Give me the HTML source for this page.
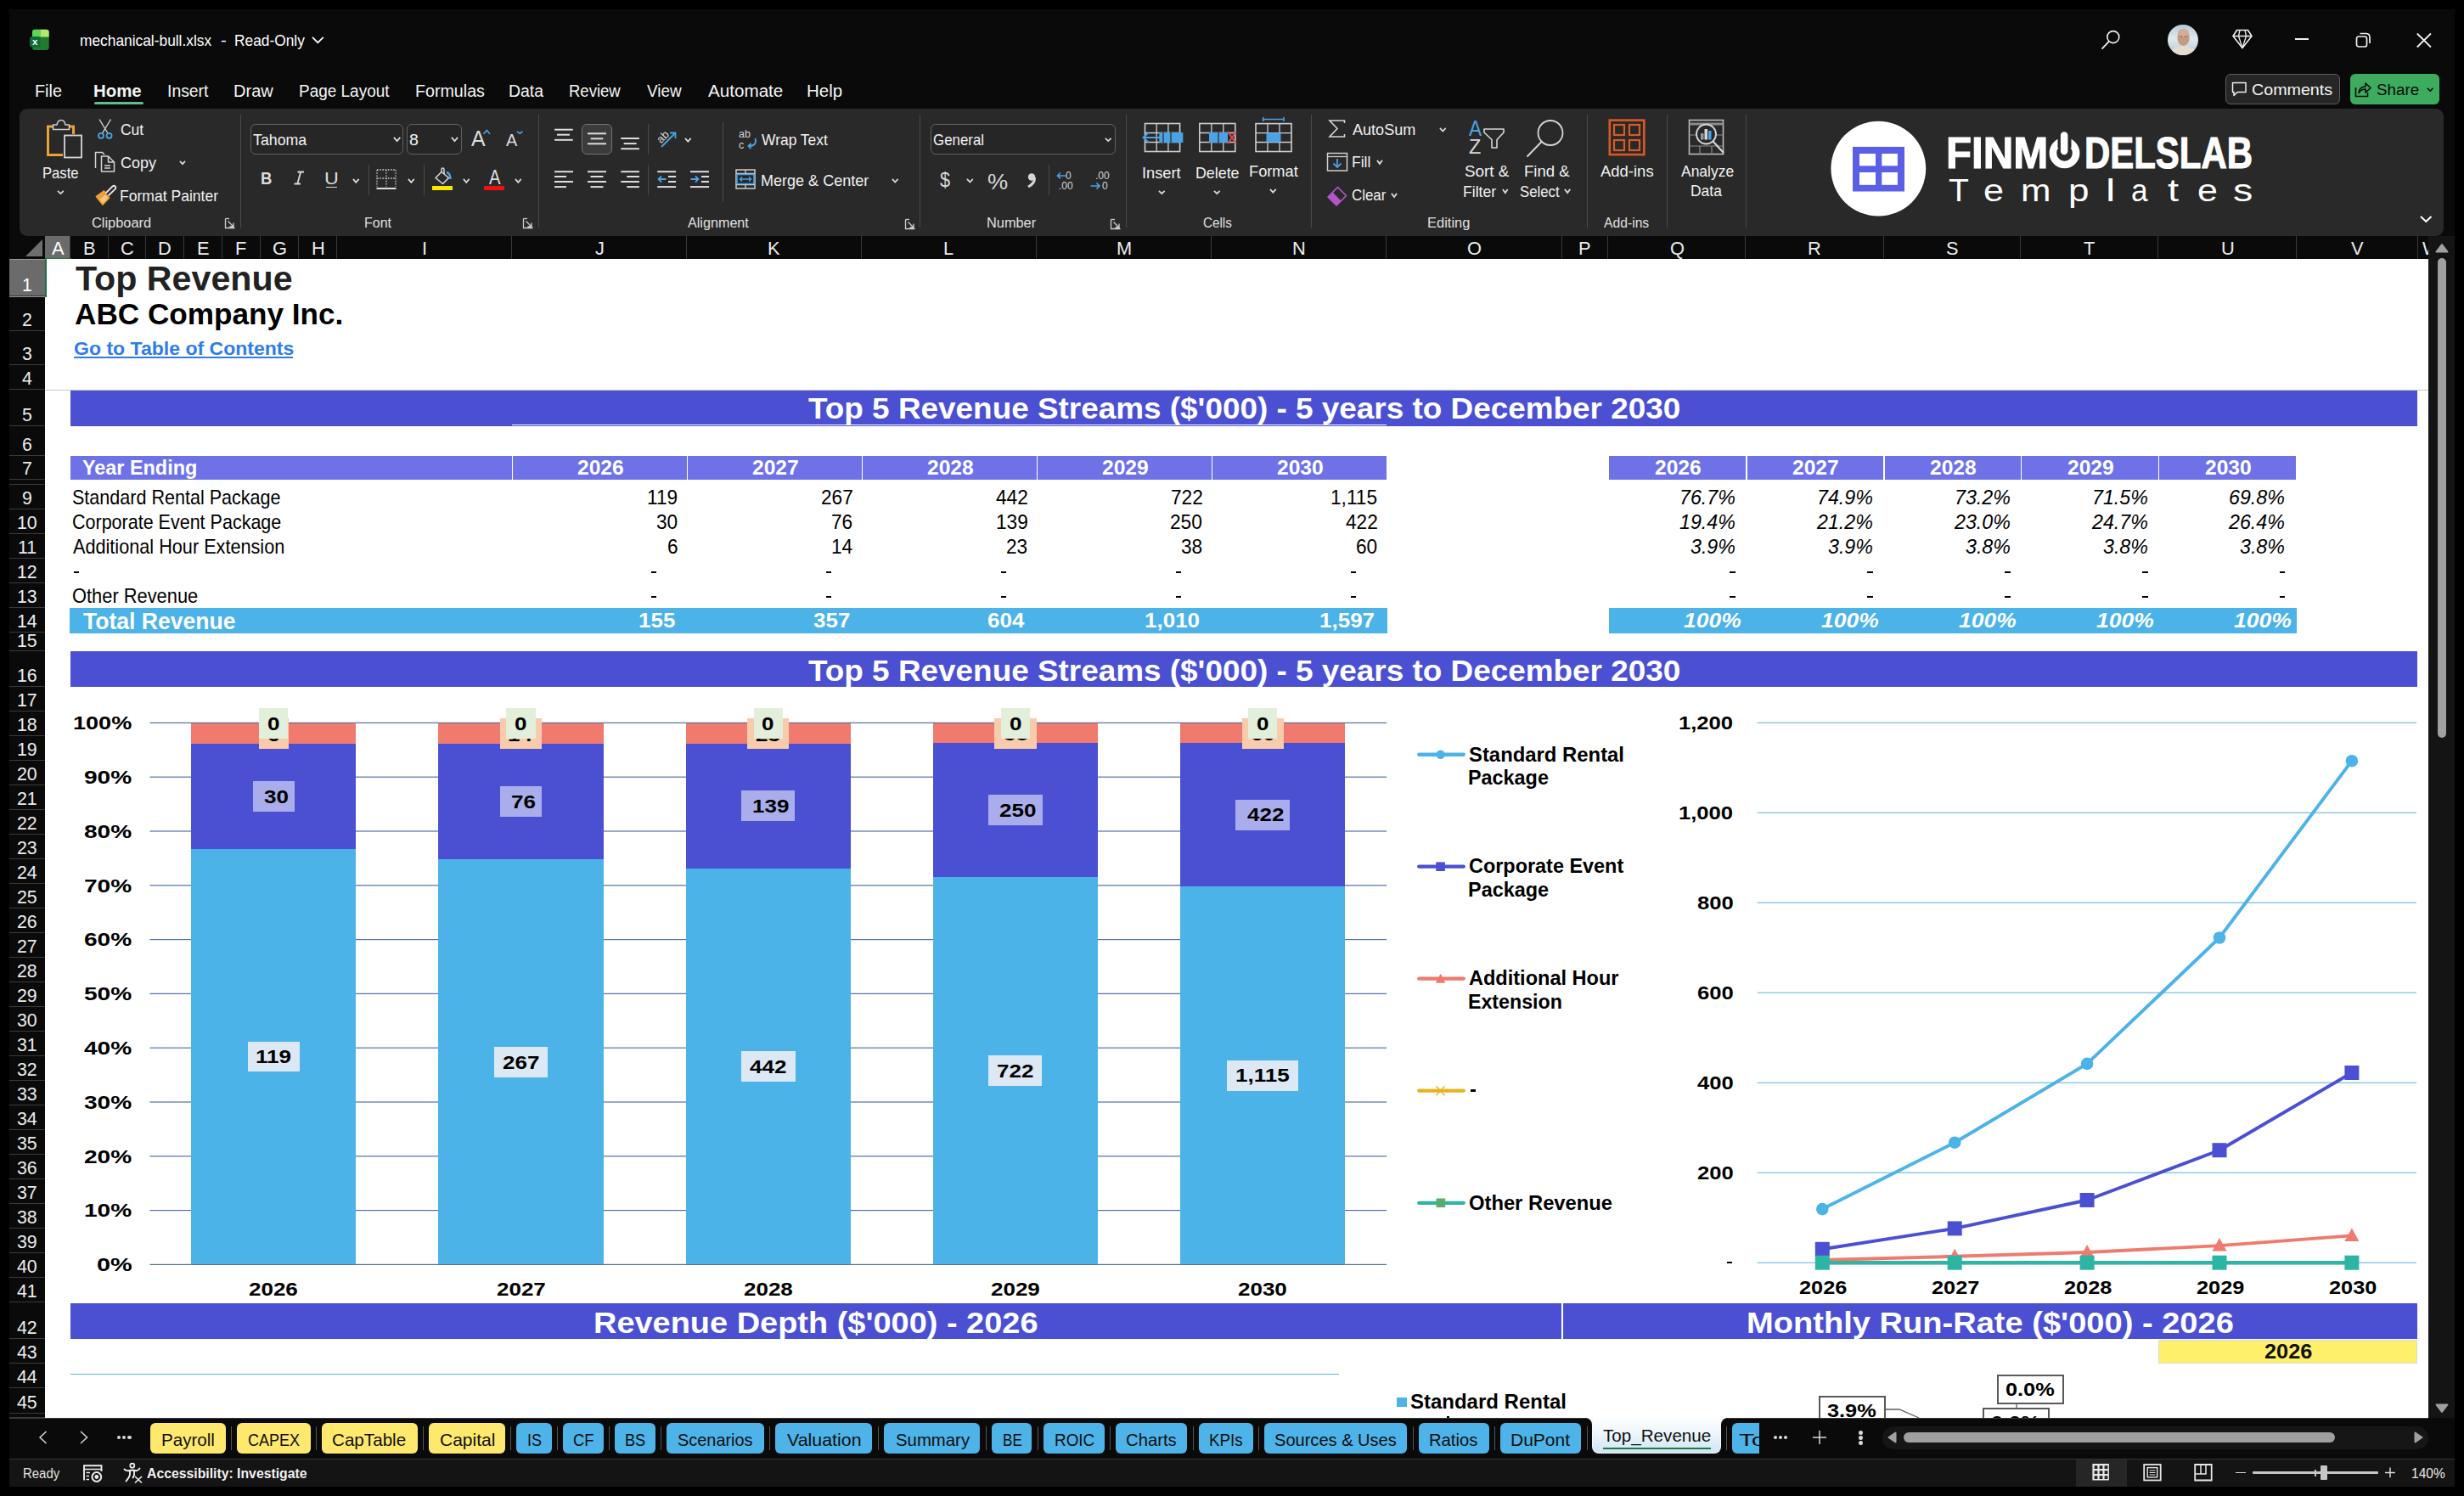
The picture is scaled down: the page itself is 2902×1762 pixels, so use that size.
<!DOCTYPE html>
<html><head><meta charset="utf-8"><title>Top Revenue</title>
<style>
*{margin:0;padding:0;box-sizing:border-box}
html,body{width:2902px;height:1762px;overflow:hidden;background:#000;font-family:"Liberation Sans",sans-serif;position:relative}
.a{position:absolute}
svg.a{overflow:visible}
.t{position:absolute;white-space:nowrap;line-height:1;font-family:"Liberation Sans",sans-serif}
</style></head><body>
<div class="a" style="left:11px;top:11px;width:2880px;height:1740px;background:#0a0a0a;"></div>
<svg class="a" style="left:34px;top:34px;" width="26" height="26" viewBox="0 0 26 26">
      <rect x="4" y="0.7" width="19.7" height="24.2" rx="3" fill="#227b2c"/>
      <path d="M7 0.7 H13.5 V9.5 H4 V3.7 Q4 0.7 7 0.7 Z" fill="#5ed65a"/>
      <path d="M13.5 0.7 H20.7 Q23.7 0.7 23.7 3.7 V9.5 H13.5 Z" fill="#b6e870"/>
      <rect x="1" y="8.9" width="12.5" height="12.9" rx="3" fill="#0f6b3a"/>
      <text x="7.2" y="19" font-size="11.5" font-weight="700" fill="#f4fff4" text-anchor="middle" font-family="Liberation Sans">x</text>
    </svg>
<div class="t" style="left:94.37px;top:39px;font-size:18.20px;font-weight:400;color:#ffffff;transform:scaleX(0.9534);transform-origin:0 0;">mechanical-bull.xlsx</div>
<div class="t" style="left:260.08px;top:39px;font-size:18.20px;font-weight:400;color:#ffffff;transform:scaleX(1.1213);transform-origin:0 0;">-</div>
<div class="t" style="left:276.11px;top:39px;font-size:18.20px;font-weight:400;color:#ffffff;transform:scaleX(0.9528);transform-origin:0 0;">Read-Only</div>
<svg class="a" style="left:365px;top:41px;" width="19" height="12" viewBox="0 0 19 12"><path d="M2.9 2.9 L9.3 9.2 L15.8 2.9" stroke="#ffffff" stroke-width="1.7" fill="none" stroke-linecap="butt" stroke-linejoin="miter"/></svg>
<svg class="a" style="left:2470px;top:30px;" width="30" height="30" viewBox="0 0 30 30"><circle cx="18.8" cy="13.6" r="7" stroke="#f0f0f0" stroke-width="1.6" fill="none"/><path d="M13.8 18.8 L6 27.2" stroke="#f0f0f0" stroke-width="1.7" stroke-linecap="round"/></svg>
<svg class="a" style="left:2553px;top:29px;" width="36" height="36" viewBox="0 0 36 36"><defs><clipPath id="avc"><circle cx="18" cy="18" r="18"/></clipPath>
      <linearGradient id="avg" x1="0" y1="0" x2="0" y2="1"><stop offset="0" stop-color="#b7c9da"/><stop offset="0.45" stop-color="#dfe9ee"/><stop offset="1" stop-color="#b9c6cc"/></linearGradient></defs>
      <g clip-path="url(#avc)"><rect width="36" height="36" fill="url(#avg)"/>
      <ellipse cx="18.5" cy="15.5" rx="7.2" ry="9.5" fill="#c49a82"/><ellipse cx="18.5" cy="9.5" rx="6.5" ry="4.5" fill="#d2ad97"/>
      <path d="M15 14 H17 M20 14 H22" stroke="#6e5142" stroke-width="1"/>
      <path d="M3 36 Q5 25.5 18.5 25.5 Q32 25.5 34 36 Z" fill="#e4dccf"/></g></svg>
<svg class="a" style="left:2627px;top:33px;" width="28" height="27" viewBox="0 0 28 27"><path d="M7.5 2.5 H20.5 L25 9.5 L14 23.5 L3 9.5 Z" stroke="#f0f0f0" stroke-width="1.6" fill="none" stroke-linejoin="round"/><path d="M3 9.5 H25 M11 2.5 L9.5 9.5 L14 23.5 L18.5 9.5 L17 2.5" stroke="#f0f0f0" stroke-width="1.3" fill="none" stroke-linejoin="round"/></svg>
<div class="a" style="left:2703px;top:45px;width:16px;height:2px;background:#f0f0f0;"></div>
<svg class="a" style="left:2772px;top:36px;" width="22" height="22" viewBox="0 0 22 22"><rect x="3.5" y="7" width="12" height="12" rx="2.5" stroke="#f0f0f0" stroke-width="1.7" fill="none"/><path d="M7.5 3.5 H14.5 Q19 3.5 19 8 V15" stroke="#f0f0f0" stroke-width="1.7" fill="none"/></svg>
<svg class="a" style="left:2844px;top:37px;" width="22" height="22" viewBox="0 0 22 22"><path d="M2.8 2.5 L19 18.5 M19 2.5 L2.8 18.5" stroke="#f0f0f0" stroke-width="1.8"/></svg>
<div class="t" style="left:41.02px;top:97px;font-size:20.00px;font-weight:400;color:#f5f5f5;transform:scaleX(0.9899);transform-origin:0 0;">File</div>
<div class="t" style="left:110.47px;top:97px;font-size:20.00px;font-weight:700;color:#f5f5f5;transform:scaleX(1.0206);transform-origin:0 0;">Home</div>
<div class="t" style="left:196.66px;top:97px;font-size:20.00px;font-weight:400;color:#f5f5f5;transform:scaleX(0.9688);transform-origin:0 0;">Insert</div>
<div class="t" style="left:275.40px;top:97px;font-size:20.00px;font-weight:400;color:#f5f5f5;transform:scaleX(1.0022);transform-origin:0 0;">Draw</div>
<div class="t" style="left:352.18px;top:97px;font-size:20.00px;font-weight:400;color:#f5f5f5;transform:scaleX(0.9485);transform-origin:0 0;">Page Layout</div>
<div class="t" style="left:489.43px;top:97px;font-size:20.00px;font-weight:400;color:#f5f5f5;transform:scaleX(0.9827);transform-origin:0 0;">Formulas</div>
<div class="t" style="left:599.24px;top:97px;font-size:20.00px;font-weight:400;color:#f5f5f5;transform:scaleX(0.9729);transform-origin:0 0;">Data</div>
<div class="t" style="left:670.32px;top:97px;font-size:20.00px;font-weight:400;color:#f5f5f5;transform:scaleX(0.9250);transform-origin:0 0;">Review</div>
<div class="t" style="left:762.41px;top:97px;font-size:20.00px;font-weight:400;color:#f5f5f5;transform:scaleX(0.9441);transform-origin:0 0;">View</div>
<div class="t" style="left:834.00px;top:97px;font-size:20.00px;font-weight:400;color:#f5f5f5;transform:scaleX(1.0319);transform-origin:0 0;">Automate</div>
<div class="t" style="left:949.56px;top:97px;font-size:20.00px;font-weight:400;color:#f5f5f5;transform:scaleX(1.0233);transform-origin:0 0;">Help</div>
<div class="a" style="left:110.8px;top:120px;width:58.2px;height:3.200000000000003px;background:#62bd8e;border-radius:2px"></div>
<div class="a" style="left:2621.4px;top:87.2px;width:134.4px;height:35.4px;border:1px solid #5c5c5c;border-radius:6px;background:#262626"></div>
<svg class="a" style="left:2627px;top:95px;" width="22" height="22" viewBox="0 0 22 22"><path d="M2.5 2.5 H18 V13.5 H8 L4 17.5 V13.5 H2.5 Z" stroke="#f0f0f0" stroke-width="1.5" fill="none" stroke-linejoin="round"/></svg>
<div class="t" style="left:2651.82px;top:96px;font-size:19.00px;font-weight:400;color:#f5f5f5;transform:scaleX(1.0349);transform-origin:0 0;">Comments</div>
<div class="a" style="left:2768px;top:87.2px;width:104.7px;height:35.4px;border-radius:6px;background:#3dac5f"></div>
<svg class="a" style="left:2772px;top:94px;" width="22" height="22" viewBox="0 0 22 22"><path d="M2.5 9 V19.5 H16.5 V15" stroke="#0a0a0a" stroke-width="1.6" fill="none"/><path d="M6 15.5 Q7 8 14 8 V4 L20 9.5 L14 15 V11 Q9 11 6 15.5 Z" stroke="#0a0a0a" stroke-width="1.6" fill="none" stroke-linejoin="round"/></svg>
<div class="t" style="left:2798.55px;top:96px;font-size:19.00px;font-weight:400;color:#0a0a0a;transform:scaleX(0.9893);transform-origin:0 0;">Share</div>
<svg class="a" style="left:2856px;top:101px;" width="12" height="9" viewBox="0 0 12 9"><path d="M2.8 2.8 L6.2 6.2 L9.5 2.8" stroke="#0a0a0a" stroke-width="1.6" fill="none" stroke-linecap="butt" stroke-linejoin="miter"/></svg>
<div class="a" style="left:23px;top:128px;width:2855px;height:150px;background:#292929;border-radius:9px"></div>
<div class="a" style="left:282.5px;top:135px;width:1.0px;height:133px;background:#4a4a4a;"></div>
<div class="a" style="left:633.5px;top:135px;width:1.0px;height:133px;background:#4a4a4a;"></div>
<div class="a" style="left:1082.5px;top:135px;width:1.0px;height:133px;background:#4a4a4a;"></div>
<div class="a" style="left:1325.5px;top:135px;width:1.0px;height:133px;background:#4a4a4a;"></div>
<div class="a" style="left:1543.5px;top:135px;width:1.0px;height:133px;background:#4a4a4a;"></div>
<div class="a" style="left:1868.5px;top:135px;width:1.0px;height:133px;background:#4a4a4a;"></div>
<div class="a" style="left:1962.5px;top:135px;width:1.0px;height:133px;background:#4a4a4a;"></div>
<div class="a" style="left:2055.5px;top:135px;width:1.0px;height:133px;background:#4a4a4a;"></div>
<svg class="a" style="left:264px;top:256px;" width="15" height="15" viewBox="0 0 15 15"><path d="M1.5 1.5 V12.5 H12.5 M4.5 4.5 L11 11 M11 6.5 V11 H6.5" stroke="#cfcfcf" stroke-width="1.3" fill="none"/><path d="M1.5 1.5 H6" stroke="#cfcfcf" stroke-width="1.3"/></svg>
<svg class="a" style="left:615px;top:256px;" width="15" height="15" viewBox="0 0 15 15"><path d="M1.5 1.5 V12.5 H12.5 M4.5 4.5 L11 11 M11 6.5 V11 H6.5" stroke="#cfcfcf" stroke-width="1.3" fill="none"/><path d="M1.5 1.5 H6" stroke="#cfcfcf" stroke-width="1.3"/></svg>
<svg class="a" style="left:1064.9px;top:256.7px;" width="15" height="15" viewBox="0 0 15 15"><path d="M1.5 1.5 V12.5 H12.5 M4.5 4.5 L11 11 M11 6.5 V11 H6.5" stroke="#cfcfcf" stroke-width="1.3" fill="none"/><path d="M1.5 1.5 H6" stroke="#cfcfcf" stroke-width="1.3"/></svg>
<svg class="a" style="left:1306.8px;top:256.7px;" width="15" height="15" viewBox="0 0 15 15"><path d="M1.5 1.5 V12.5 H12.5 M4.5 4.5 L11 11 M11 6.5 V11 H6.5" stroke="#cfcfcf" stroke-width="1.3" fill="none"/><path d="M1.5 1.5 H6" stroke="#cfcfcf" stroke-width="1.3"/></svg>
<div class="t" style="left:108.18px;top:255px;font-size:16.80px;font-weight:400;color:#e0e0e0;transform:scaleX(0.9761);transform-origin:0 0;">Clipboard</div>
<div class="t" style="left:429.32px;top:255px;font-size:16.80px;font-weight:400;color:#e0e0e0;transform:scaleX(0.9511);transform-origin:0 0;">Font</div>
<div class="t" style="left:810.20px;top:255px;font-size:16.80px;font-weight:400;color:#e0e0e0;transform:scaleX(0.9626);transform-origin:0 0;">Alignment</div>
<div class="t" style="left:1162.19px;top:255px;font-size:16.80px;font-weight:400;color:#e0e0e0;transform:scaleX(0.9737);transform-origin:0 0;">Number</div>
<div class="t" style="left:1416.94px;top:255px;font-size:16.80px;font-weight:400;color:#e0e0e0;transform:scaleX(0.9040);transform-origin:0 0;">Cells</div>
<div class="t" style="left:1681.08px;top:255px;font-size:16.80px;font-weight:400;color:#e0e0e0;transform:scaleX(0.9818);transform-origin:0 0;">Editing</div>
<div class="t" style="left:1888.50px;top:255px;font-size:16.80px;font-weight:400;color:#e0e0e0;transform:scaleX(0.9350);transform-origin:0 0;">Add-ins</div>
<svg class="a" style="left:52px;top:138px;" width="48" height="52" viewBox="0 0 48 52"><path d="M11 11 H4.5 V44.5 H22" stroke="#eaa235" stroke-width="3" fill="none"/>
      <path d="M29 11 H34.5 V20" stroke="#eaa235" stroke-width="3" fill="none"/>
      <path d="M10.5 14.5 V9 H15 Q16 3.5 20 3.5 Q24 3.5 25 9 H29.5 V14.5 Z" stroke="#cfcfcf" stroke-width="1.5" fill="#292929" stroke-linejoin="round"/>
      <rect x="24" y="21.5" width="20" height="26" stroke="#d6d6d6" stroke-width="1.8" fill="#292929"/></svg>
<div class="t" style="left:50.37px;top:196px;font-size:17.70px;font-weight:400;color:#f2f2f2;transform:scaleX(0.9393);transform-origin:0 0;">Paste</div>
<svg class="a" style="left:65px;top:222px;" width="13" height="9" viewBox="0 0 13 9"><path d="M2.9 2.9 L6.4 6.1 L9.8 2.9" stroke="#d8d8d8" stroke-width="1.8" fill="none" stroke-linecap="butt" stroke-linejoin="miter"/></svg>
<svg class="a" style="left:113px;top:138px;" width="22" height="28" viewBox="0 0 22 28"><path d="M4 2.5 L14 19 M17.5 2.5 L7.5 19" stroke="#d4d4d4" stroke-width="1.4"/><circle cx="6" cy="21.8" r="3" stroke="#4aa3e6" stroke-width="1.8" fill="none"/><circle cx="15.6" cy="21.8" r="3" stroke="#4aa3e6" stroke-width="1.8" fill="none"/></svg>
<div class="t" style="left:141.73px;top:145px;font-size:17.70px;font-weight:400;color:#f2f2f2;transform:scaleX(0.9868);transform-origin:0 0;">Cut</div>
<svg class="a" style="left:110px;top:177px;" width="28" height="28" viewBox="0 0 28 28"><path d="M2.5 21 V2.5 H10.5 L13 5" stroke="#d4d4d4" stroke-width="1.5" fill="none"/><path d="M9.5 7 H17.5 L24.5 14 V25 H9.5 Z M17.5 7 V14 H24.5 M13 18 H20 M13 21 H20" stroke="#d4d4d4" stroke-width="1.5" fill="#292929" stroke-linejoin="round"/></svg>
<div class="t" style="left:141.70px;top:184px;font-size:17.70px;font-weight:400;color:#f2f2f2;transform:scaleX(1.0162);transform-origin:0 0;">Copy</div>
<svg class="a" style="left:209px;top:187px;" width="12" height="9" viewBox="0 0 12 9"><path d="M2.9 2.9 L6.0 6.1 L9.0 2.9" stroke="#d8d8d8" stroke-width="1.8" fill="none" stroke-linecap="butt" stroke-linejoin="miter"/></svg>
<svg class="a" style="left:110px;top:216px;" width="28" height="28" viewBox="0 0 28 28"><path d="M3.5 15.5 L12.5 9 L18.5 17 L11 25 Z" fill="#f6c67a" stroke="#eaa035" stroke-width="1.8" stroke-linejoin="round"/><path d="M3.5 15.5 L12.5 9 L15.2 12.8 L6.5 19.5 Z" fill="#eaa035"/><path d="M14.5 11.5 L22.5 3.5 Q24.5 2 25.8 3.5 Q27 5 25.5 6.8 L17.5 14.5" stroke="#e6e6e6" stroke-width="1.8" fill="#292929" stroke-linejoin="round"/></svg>
<div class="t" style="left:141.20px;top:223px;font-size:17.70px;font-weight:400;color:#f2f2f2;transform:scaleX(0.9921);transform-origin:0 0;">Format Painter</div>
<div class="a" style="left:295px;top:146.4px;width:180.4px;height:35.5px;border:1px solid #616161;border-radius:6px;background:#262626"></div>
<div class="t" style="left:298.44px;top:156px;font-size:18.20px;font-weight:400;color:#f2f2f2;transform:scaleX(0.9777);transform-origin:0 0;">Tahoma</div>
<svg class="a" style="left:461px;top:159px;" width="13" height="10" viewBox="0 0 13 10"><path d="M2.9 2.9 L6.6 7.2 L10.3 2.9" stroke="#d8d8d8" stroke-width="1.8" fill="none" stroke-linecap="butt" stroke-linejoin="miter"/></svg>
<div class="a" style="left:479.3px;top:146.4px;width:64.3px;height:35.5px;border:1px solid #616161;border-radius:6px;background:#262626"></div>
<div class="t" style="left:481.62px;top:156px;font-size:18.20px;font-weight:400;color:#f2f2f2;transform:scaleX(1.0755);transform-origin:0 0;">8</div>
<svg class="a" style="left:529px;top:159px;" width="13" height="10" viewBox="0 0 13 10"><path d="M2.9 2.9 L6.5 7.2 L10.0 2.9" stroke="#d8d8d8" stroke-width="1.8" fill="none" stroke-linecap="butt" stroke-linejoin="miter"/></svg>
<div class="t" style="left:554.50px;top:150px;font-size:26.50px;font-weight:400;color:#dcdcdc;transform:scaleX(0.9363);transform-origin:0 0;">A</div>
<svg class="a" style="left:567px;top:151px;" width="12" height="9" viewBox="0 0 12 9"><path d="M2.5 6.7 L6.3 2.5 L10 6.7" stroke="#4aa3e6" stroke-width="1.7" fill="none"/></svg>
<div class="t" style="left:595.70px;top:155px;font-size:20.00px;font-weight:400;color:#dcdcdc;transform:scaleX(0.9925);transform-origin:0 0;">A</div>
<svg class="a" style="left:606px;top:152px;" width="12" height="8" viewBox="0 0 12 8"><path d="M2.9 2.9 L6.2 5.3 L9.5 2.9" stroke="#4aa3e6" stroke-width="1.7" fill="none" stroke-linecap="butt" stroke-linejoin="miter"/></svg>
<div class="t" style="left:306.60px;top:199px;font-size:21.00px;font-weight:700;color:#dcdcdc;transform:scaleX(0.8821);transform-origin:0 0;">B</div>
<svg class="a" style="left:344px;top:200px;" width="16" height="20" viewBox="0 0 16 20"><path d="M6.5 2.5 H14 M2.5 16.5 H10 M10.2 2.5 L6.3 16.5" stroke="#dcdcdc" stroke-width="1.8" fill="none"/></svg>
<div class="t" style="left:381.75px;top:200px;font-size:20.50px;font-weight:400;color:#dcdcdc;transform:scaleX(1.1382);transform-origin:0 0;">U</div>
<div class="a" style="left:383.5px;top:219.5px;width:13.300000000000011px;height:1.5px;background:#dcdcdc;"></div>
<svg class="a" style="left:413px;top:208px;" width="12" height="10" viewBox="0 0 12 10"><path d="M2.9 2.9 L6.2 6.8 L9.6 2.9" stroke="#d8d8d8" stroke-width="1.8" fill="none" stroke-linecap="butt" stroke-linejoin="miter"/></svg>
<div class="a" style="left:434px;top:194px;width:1px;height:36px;background:#4a4a4a;"></div>
<svg class="a" style="left:443px;top:199px;" width="25" height="25" viewBox="0 0 25 25"><path d="M1 1 H23 M1 1 V21 M23 1 V21 M12 1 V21 M1 11 H23" stroke="#cfcfcf" stroke-width="1.3" stroke-dasharray="1.6 1.6" fill="none"/><path d="M0.5 23 H23.5" stroke="#e0e0e0" stroke-width="2"/></svg>
<svg class="a" style="left:478px;top:208px;" width="13" height="10" viewBox="0 0 13 10"><path d="M2.9 2.9 L6.3 6.8 L9.7 2.9" stroke="#d8d8d8" stroke-width="1.8" fill="none" stroke-linecap="butt" stroke-linejoin="miter"/></svg>
<div class="a" style="left:499px;top:194px;width:1px;height:36px;background:#4a4a4a;"></div>
<svg class="a" style="left:509px;top:197px;" width="26" height="24" viewBox="0 0 26 24"><path d="M4 12.5 L11 5.5 L19.5 12.5 L12.5 19.5 Z" stroke="#d6d6d6" stroke-width="1.6" fill="none" stroke-linejoin="round"/><path d="M11 5.5 V2.5 Q11 1 12.5 1 Q14 1 14 2.5 V8" stroke="#d6d6d6" stroke-width="1.5" fill="none"/><path d="M17 6 Q21.5 7 21.5 14" stroke="#4aa3e6" stroke-width="2.4" fill="none"/></svg>
<div class="a" style="left:509px;top:218.5px;width:24.200000000000045px;height:5.699999999999989px;background:#f6ea00;"></div>
<div class="t" style="left:575.50px;top:198px;font-size:23.00px;font-weight:400;color:#dcdcdc;transform:scaleX(0.8826);transform-origin:0 0;">A</div>
<div class="a" style="left:569.8px;top:218.5px;width:24.200000000000045px;height:5.699999999999989px;background:#ee1111;"></div>
<svg class="a" style="left:543px;top:208px;" width="12" height="10" viewBox="0 0 12 10"><path d="M2.9 2.9 L6.2 6.8 L9.6 2.9" stroke="#d8d8d8" stroke-width="1.8" fill="none" stroke-linecap="butt" stroke-linejoin="miter"/></svg>
<svg class="a" style="left:604px;top:208px;" width="13" height="10" viewBox="0 0 13 10"><path d="M2.9 2.9 L6.3 6.8 L9.7 2.9" stroke="#d8d8d8" stroke-width="1.8" fill="none" stroke-linecap="butt" stroke-linejoin="miter"/></svg>
<svg class="a" style="left:640px;top:140px;" width="200" height="100" viewBox="0 0 200 100"><path d="M13.1 12.7 H34.7" stroke="#dedede" stroke-width="2"/><path d="M16 18.7 H31" stroke="#dedede" stroke-width="2"/><path d="M13.1 24.8 H34.7" stroke="#dedede" stroke-width="2"/></svg>
<div class="a" style="left:685.3px;top:146.3px;width:35.4px;height:35.3px;border:1px solid #747474;border-radius:6px;background:#3b3b3b"></div>
<svg class="a" style="left:640px;top:140px;" width="200" height="100" viewBox="0 0 200 100"><path d="M52 17.3 H74" stroke="#dedede" stroke-width="2"/><path d="M55.7 23.3 H70.3" stroke="#dedede" stroke-width="2"/><path d="M52 29.3 H74" stroke="#dedede" stroke-width="2"/></svg>
<svg class="a" style="left:640px;top:140px;" width="200" height="100" viewBox="0 0 200 100"><path d="M91.3 23 H112.9" stroke="#dedede" stroke-width="2"/><path d="M94.6 29.1 H109.6" stroke="#dedede" stroke-width="2"/><path d="M91.3 35.2 H112.9" stroke="#dedede" stroke-width="2"/></svg>
<div class="a" style="left:763.3px;top:146.3px;width:1.0px;height:35.29999999999998px;background:#4a4a4a;"></div>
<svg class="a" style="left:770px;top:148px;" width="32" height="30" viewBox="0 0 32 30"><text x="3" y="18" font-size="13" fill="#d6d6d6" font-family="Liberation Sans" transform="rotate(-45 10 13)">ab</text><path d="M9 25 L25.5 8.5 M19 8.5 H25.5 V15" stroke="#4aa3e6" stroke-width="1.8" fill="none"/></svg>
<svg class="a" style="left:804px;top:160px;" width="13" height="10" viewBox="0 0 13 10"><path d="M2.9 2.9 L6.3 6.6 L9.7 2.9" stroke="#d8d8d8" stroke-width="1.8" fill="none" stroke-linecap="butt" stroke-linejoin="miter"/></svg>
<svg class="a" style="left:640px;top:190px;" width="200" height="40" viewBox="0 0 200 40"><path d="M13 12.2 H35" stroke="#dedede" stroke-width="2"/><path d="M13 18 H27" stroke="#dedede" stroke-width="2"/><path d="M13 24 H35" stroke="#dedede" stroke-width="2"/><path d="M13 30.1 H27" stroke="#dedede" stroke-width="2"/></svg>
<svg class="a" style="left:640px;top:190px;" width="200" height="40" viewBox="0 0 200 40"><path d="M52 12.2 H74" stroke="#dedede" stroke-width="2"/><path d="M55.5 18 H70.5" stroke="#dedede" stroke-width="2"/><path d="M52 24 H74" stroke="#dedede" stroke-width="2"/><path d="M55.5 30.1 H70.5" stroke="#dedede" stroke-width="2"/></svg>
<svg class="a" style="left:640px;top:190px;" width="200" height="40" viewBox="0 0 200 40"><path d="M91.3 12.2 H112.9" stroke="#dedede" stroke-width="2"/><path d="M98.3 18 H112.9" stroke="#dedede" stroke-width="2"/><path d="M91.3 24 H112.9" stroke="#dedede" stroke-width="2"/><path d="M98.3 30.1 H112.9" stroke="#dedede" stroke-width="2"/></svg>
<div class="a" style="left:763.3px;top:194.3px;width:1.0px;height:35.69999999999999px;background:#4a4a4a;"></div>
<svg class="a" style="left:640px;top:190px;" width="220" height="40" viewBox="0 0 220 40"><path d="M134.2 12.2 H156.1" stroke="#dedede" stroke-width="2"/><path d="M147 18 H156.1" stroke="#dedede" stroke-width="2"/><path d="M147 24 H156.1" stroke="#dedede" stroke-width="2"/><path d="M134.2 30.1 H156.1" stroke="#dedede" stroke-width="2"/><path d="M144.5 21 H135.5 M139 17.5 L135.5 21 L139 24.5" stroke="#4aa3e6" stroke-width="1.8" fill="none"/></svg>
<svg class="a" style="left:640px;top:190px;" width="220" height="40" viewBox="0 0 220 40"><path d="M173 12.2 H195" stroke="#dedede" stroke-width="2"/><path d="M186 18 H195" stroke="#dedede" stroke-width="2"/><path d="M186 24 H195" stroke="#dedede" stroke-width="2"/><path d="M173 30.1 H195" stroke="#dedede" stroke-width="2"/><path d="M173.5 21 H182.5 M179 17.5 L182.5 21 L179 24.5" stroke="#4aa3e6" stroke-width="1.8" fill="none"/></svg>
<div class="a" style="left:851px;top:144px;width:1px;height:94px;background:#4a4a4a;"></div>
<svg class="a" style="left:868px;top:151px;" width="28" height="28" viewBox="0 0 28 28"><text x="2" y="11" font-size="12.5" fill="#d6d6d6" font-family="Liberation Sans">ab</text><text x="2" y="23.5" font-size="12.5" fill="#d6d6d6" font-family="Liberation Sans">c</text><path d="M21.5 12 Q24 21 13.5 21 M16.5 18 L13.5 21 L16.5 24" stroke="#4aa3e6" stroke-width="1.9" fill="none"/></svg>
<div class="t" style="left:897.41px;top:157px;font-size:17.70px;font-weight:400;color:#f2f2f2;transform:scaleX(0.9852);transform-origin:0 0;">Wrap Text</div>
<svg class="a" style="left:865px;top:198px;" width="27" height="27" viewBox="0 0 27 27"><rect x="2" y="2" width="22" height="22" stroke="#d0d0d0" stroke-width="1.5" fill="none"/><path d="M2 6.5 H24 M2 19.5 H24 M13 2 V6.5 M13 19.5 V24" stroke="#d0d0d0" stroke-width="1.3"/><rect x="3" y="7.5" width="20" height="11" fill="none" stroke="#4aa3e6" stroke-width="1.5"/><path d="M6.5 13 H19.5 M9 10.5 L6.5 13 L9 15.5 M17 10.5 L19.5 13 L17 15.5" stroke="#4aa3e6" stroke-width="1.5" fill="none"/></svg>
<div class="t" style="left:896.06px;top:205px;font-size:17.70px;font-weight:400;color:#f2f2f2;transform:scaleX(1.0195);transform-origin:0 0;">Merge &amp; Center</div>
<svg class="a" style="left:1048px;top:208px;" width="12" height="9" viewBox="0 0 12 9"><path d="M2.9 2.9 L6.2 6.5 L9.6 2.9" stroke="#d8d8d8" stroke-width="1.8" fill="none" stroke-linecap="butt" stroke-linejoin="miter"/></svg>
<div class="a" style="left:1096.3px;top:146.3px;width:217.3px;height:35.3px;border:1px solid #616161;border-radius:6px;background:#262626"></div>
<div class="t" style="left:1098.76px;top:156px;font-size:18.20px;font-weight:400;color:#f2f2f2;transform:scaleX(0.9280);transform-origin:0 0;">General</div>
<svg class="a" style="left:1299px;top:160px;" width="12" height="9" viewBox="0 0 12 9"><path d="M2.9 2.9 L6.2 6.1 L9.6 2.9" stroke="#d8d8d8" stroke-width="1.8" fill="none" stroke-linecap="butt" stroke-linejoin="miter"/></svg>
<div class="t" style="left:1107.08px;top:201px;font-size:23.00px;font-weight:400;color:#d6d6d6;transform:scaleX(0.9434);transform-origin:0 0;">$</div>
<svg class="a" style="left:1136px;top:208px;" width="13" height="9" viewBox="0 0 13 9"><path d="M2.9 2.9 L6.4 6.5 L9.8 2.9" stroke="#d8d8d8" stroke-width="1.8" fill="none" stroke-linecap="butt" stroke-linejoin="miter"/></svg>
<div class="t" style="left:1162.55px;top:202px;font-size:25.00px;font-weight:400;color:#d6d6d6;transform:scaleX(1.0878);transform-origin:0 0;">%</div>
<svg class="a" style="left:1206px;top:201px;" width="18" height="22" viewBox="0 0 18 22"><circle cx="9" cy="7.5" r="4.2" fill="#d6d6d6"/><path d="M12.5 8 Q13 15 5 19" stroke="#d6d6d6" stroke-width="3" fill="none"/></svg>
<div class="a" style="left:1235px;top:194.3px;width:1px;height:35.69999999999999px;background:#4a4a4a;"></div>
<svg class="a" style="left:1242px;top:198px;" width="28" height="28" viewBox="0 0 28 28"><text x="13" y="13" font-size="12" fill="#d6d6d6" font-family="Liberation Sans">0</text><text x="5" y="25" font-size="12" fill="#d6d6d6" font-family="Liberation Sans">.00</text><path d="M13 9 H3.5 M7 5.5 L3.5 9 L7 12.5" stroke="#4aa3e6" stroke-width="1.7" fill="none"/></svg>
<svg class="a" style="left:1282px;top:198px;" width="28" height="28" viewBox="0 0 28 28"><text x="8" y="13" font-size="12" fill="#d6d6d6" font-family="Liberation Sans">.00</text><text x="16" y="25" font-size="12" fill="#d6d6d6" font-family="Liberation Sans">0</text><path d="M2.5 21 H13 M9.5 17.5 L13 21 L9.5 24.5" stroke="#4aa3e6" stroke-width="1.7" fill="none"/></svg>
<svg class="a" style="left:1340px;top:138px;" width="60" height="46" viewBox="0 0 60 46"><rect x="8.5" y="7.5" width="41.1" height="33.0" stroke="#cfcfcf" stroke-width="1.6" fill="none"/><path d="M22.2 7.5 V40.5 M35.9 7.5 V40.5 M8.5 18.5 H49.6 M8.5 29.5 H49.6" stroke="#cfcfcf" stroke-width="1.3"/><rect x="25.3" y="18" width="28" height="12" fill="#4aa3e6"/><path d="M28 24 H7 M13 18 L6.5 24 L13 30" stroke="#4aa3e6" stroke-width="2" fill="none"/><path d="M30 18 V30 M39 18 V30" stroke="#292929" stroke-width="1.2"/></svg>
<div class="t" style="left:1345.36px;top:196px;font-size:17.70px;font-weight:400;color:#f2f2f2;transform:scaleX(1.0313);transform-origin:0 0;">Insert</div>
<svg class="a" style="left:1362px;top:222px;" width="13" height="9" viewBox="0 0 13 9"><path d="M2.9 2.9 L6.3 6.0 L9.7 2.9" stroke="#d8d8d8" stroke-width="1.8" fill="none" stroke-linecap="butt" stroke-linejoin="miter"/></svg>
<svg class="a" style="left:1406px;top:138px;" width="60" height="46" viewBox="0 0 60 46"><rect x="6.8" y="7.5" width="42.0" height="33.0" stroke="#cfcfcf" stroke-width="1.6" fill="none"/><path d="M20.8 7.5 V40.5 M34.8 7.5 V40.5 M6.8 18.5 H48.8 M6.8 29.5 H48.8" stroke="#cfcfcf" stroke-width="1.3"/><rect x="18" y="18" width="22" height="12" fill="#4aa3e6"/><path d="M29 18 V30" stroke="#292929" stroke-width="1.2"/><path d="M40 17 L50 31 M50 17 L40 31" stroke="#e24a4a" stroke-width="2"/></svg>
<div class="t" style="left:1408.27px;top:196px;font-size:17.70px;font-weight:400;color:#f2f2f2;transform:scaleX(1.0073);transform-origin:0 0;">Delete</div>
<svg class="a" style="left:1427px;top:222px;" width="13" height="9" viewBox="0 0 13 9"><path d="M2.9 2.9 L6.3 6.0 L9.7 2.9" stroke="#d8d8d8" stroke-width="1.8" fill="none" stroke-linecap="butt" stroke-linejoin="miter"/></svg>
<svg class="a" style="left:1474px;top:136px;" width="52" height="48" viewBox="0 0 52 48"><rect x="5" y="9.6" width="42" height="32.9" stroke="#cfcfcf" stroke-width="1.6" fill="none"/><path d="M19.0 9.6 V42.5 M33.0 9.6 V42.5 M5 20.6 H47 M5 31.5 H47" stroke="#cfcfcf" stroke-width="1.3"/><rect x="17.5" y="20.5" width="17" height="11" fill="#4aa3e6"/><path d="M13.7 4.5 H38 M13.7 2 V7 M38 2 V7" stroke="#4aa3e6" stroke-width="1.6"/></svg>
<div class="t" style="left:1471.04px;top:194px;font-size:17.70px;font-weight:400;color:#f2f2f2;transform:scaleX(1.0309);transform-origin:0 0;">Format</div>
<svg class="a" style="left:1493px;top:220px;" width="13" height="10" viewBox="0 0 13 10"><path d="M2.9 2.9 L6.3 6.6 L9.7 2.9" stroke="#d8d8d8" stroke-width="1.8" fill="none" stroke-linecap="butt" stroke-linejoin="miter"/></svg>
<svg class="a" style="left:1563px;top:139px;" width="26" height="26" viewBox="0 0 26 26"><path d="M20.5 6 V3 H3 L12 12.5 L3 22 H20.5 V19" stroke="#d6d6d6" stroke-width="1.6" fill="none" stroke-linejoin="miter"/></svg>
<div class="t" style="left:1593.30px;top:145px;font-size:17.70px;font-weight:400;color:#f2f2f2;transform:scaleX(1.0211);transform-origin:0 0;">AutoSum</div>
<svg class="a" style="left:1693px;top:148px;" width="13" height="9" viewBox="0 0 13 9"><path d="M2.9 2.9 L6.3 6.5 L9.7 2.9" stroke="#d8d8d8" stroke-width="1.8" fill="none" stroke-linecap="butt" stroke-linejoin="miter"/></svg>
<svg class="a" style="left:1561px;top:178px;" width="28" height="26" viewBox="0 0 28 26"><rect x="2.5" y="2.5" width="23" height="20.5" stroke="#d0d0d0" stroke-width="1.5" fill="none"/><path d="M2.5 6.5 H25.5" stroke="#d0d0d0" stroke-width="1.3"/><path d="M14 9 V19 M9.5 14.5 L14 19 L18.5 14.5" stroke="#4aa3e6" stroke-width="1.8" fill="none"/></svg>
<div class="t" style="left:1591.90px;top:183px;font-size:17.70px;font-weight:400;color:#f2f2f2;transform:scaleX(0.9900);transform-origin:0 0;">Fill</div>
<svg class="a" style="left:1619px;top:186px;" width="12" height="10" viewBox="0 0 12 10"><path d="M2.9 2.9 L5.9 6.9 L9.0 2.9" stroke="#d8d8d8" stroke-width="1.8" fill="none" stroke-linecap="butt" stroke-linejoin="miter"/></svg>
<svg class="a" style="left:1561px;top:216px;" width="28" height="28" viewBox="0 0 28 28"><path d="M3 16 L14.5 4.5 L24.5 14.5 L13 26 Z" fill="none" stroke="#b454c8" stroke-width="1.7" stroke-linejoin="round"/><path d="M3 16 L8.5 10.5 L18.5 20.5 L13 26 Z" fill="#b454c8"/></svg>
<div class="t" style="left:1592.46px;top:222px;font-size:17.70px;font-weight:400;color:#f2f2f2;transform:scaleX(0.9546);transform-origin:0 0;">Clear</div>
<svg class="a" style="left:1636px;top:225px;" width="12" height="10" viewBox="0 0 12 10"><path d="M2.9 2.9 L6.0 7.0 L9.1 2.9" stroke="#d8d8d8" stroke-width="1.8" fill="none" stroke-linecap="butt" stroke-linejoin="miter"/></svg>
<div class="t" style="left:1729.70px;top:139px;font-size:25.50px;font-weight:400;color:#4aa3e6;transform:scaleX(0.8905);transform-origin:0 0;">A</div>
<div class="t" style="left:1729.70px;top:161px;font-size:24.00px;font-weight:400;color:#d6d6d6;transform:scaleX(0.9773);transform-origin:0 0;">Z</div>
<svg class="a" style="left:1745px;top:149px;" width="30" height="30" viewBox="0 0 30 30"><path d="M3 3 H26 V7 L18 15.5 V25 H12 V15.5 L3 7 Z" stroke="#d6d6d6" stroke-width="1.6" fill="none" stroke-linejoin="round"/></svg>
<div class="t" style="left:1724.55px;top:194px;font-size:17.70px;font-weight:400;color:#f2f2f2;transform:scaleX(1.0654);transform-origin:0 0;">Sort &amp;</div>
<div class="t" style="left:1723.19px;top:218px;font-size:17.70px;font-weight:400;color:#f2f2f2;transform:scaleX(0.9944);transform-origin:0 0;">Filter</div>
<svg class="a" style="left:1767px;top:220px;" width="12" height="10" viewBox="0 0 12 10"><path d="M2.9 2.9 L5.8 7.1 L8.7 2.9" stroke="#d8d8d8" stroke-width="1.8" fill="none" stroke-linecap="butt" stroke-linejoin="miter"/></svg>
<svg class="a" style="left:1795px;top:139px;" width="50" height="50" viewBox="0 0 50 50"><circle cx="31" cy="17.5" r="14.5" stroke="#d6d6d6" stroke-width="1.8" fill="none"/><path d="M20.5 28 L4 45" stroke="#d6d6d6" stroke-width="1.9" stroke-linecap="round"/></svg>
<div class="t" style="left:1794.51px;top:194px;font-size:17.70px;font-weight:400;color:#f2f2f2;transform:scaleX(1.0511);transform-origin:0 0;">Find &amp;</div>
<div class="t" style="left:1789.84px;top:218px;font-size:17.70px;font-weight:400;color:#f2f2f2;transform:scaleX(0.9496);transform-origin:0 0;">Select</div>
<svg class="a" style="left:1840px;top:220px;" width="12" height="10" viewBox="0 0 12 10"><path d="M2.9 2.9 L6.1 7.1 L9.3 2.9" stroke="#d8d8d8" stroke-width="1.8" fill="none" stroke-linecap="butt" stroke-linejoin="miter"/></svg>
<svg class="a" style="left:1892px;top:138px;" width="48" height="48" viewBox="0 0 48 48"><rect x="3.8" y="3.6" width="40.5" height="40.5" stroke="#d85b25" stroke-width="2.6" fill="none"/><rect x="9" y="9" width="12" height="12" stroke="#d85b25" stroke-width="2.2" fill="none"/><rect x="27" y="9" width="12" height="12" stroke="#d85b25" stroke-width="2.2" fill="none"/><rect x="9" y="27" width="12" height="12" stroke="#d85b25" stroke-width="2.2" fill="none"/><rect x="27" y="27" width="12" height="12" stroke="#d85b25" stroke-width="2.2" fill="none"/></svg>
<div class="t" style="left:1885.20px;top:194px;font-size:17.70px;font-weight:400;color:#f2f2f2;transform:scaleX(1.0441);transform-origin:0 0;">Add-ins</div>
<svg class="a" style="left:1987px;top:139px;" width="48" height="48" viewBox="0 0 48 48"><rect x="2.5" y="2.5" width="40" height="40" stroke="#bdbdbd" stroke-width="1.6" fill="none"/><path d="M2.5 7 H42.5" stroke="#8c8c8c" stroke-width="3"/><path d="M2.5 33 H42.5 M15 33 V42.5 M29 33 V42.5 M2.5 20 H10 M34 20 H42.5" stroke="#8c8c8c" stroke-width="1.2"/><circle cx="22.5" cy="19" r="11.5" stroke="#d6d6d6" stroke-width="1.9" fill="#292929"/><rect x="16" y="18" width="3.5" height="7.5" fill="#9a9a9a"/><rect x="20.5" y="13" width="3.5" height="12.5" fill="#d6d6d6"/><rect x="25" y="15" width="3.5" height="10.5" fill="#4aa3e6"/><path d="M30.5 27.5 L43 41" stroke="#d6d6d6" stroke-width="2.2"/></svg>
<div class="t" style="left:1979.90px;top:194px;font-size:17.70px;font-weight:400;color:#f2f2f2;transform:scaleX(0.9867);transform-origin:0 0;">Analyze</div>
<div class="t" style="left:1991.40px;top:217px;font-size:17.70px;font-weight:400;color:#f2f2f2;transform:scaleX(0.9880);transform-origin:0 0;">Data</div>
<svg class="a" style="left:2156px;top:142px;" width="114" height="114" viewBox="0 0 114 114"><circle cx="56.3" cy="56.6" r="55.9" fill="#fff"/><rect x="26" y="30.9" width="61" height="52.6" fill="#5b5fe6"/><rect x="34" y="39" width="19" height="14.3" fill="#fff"/><rect x="60.3" y="39" width="18.6" height="14.3" fill="#fff"/><rect x="34" y="61" width="19" height="14.8" fill="#fff"/><rect x="60.3" y="61" width="18.6" height="14.8" fill="#fff"/></svg>
<div class="t" style="left:2292.40px;top:155px;font-size:51.00px;font-weight:700;color:#ffffff;transform:scaleX(0.9660);transform-origin:0 0;-webkit-text-stroke:1.1px #ffffff;">FINM</div>
<div class="t" style="left:2454.77px;top:155px;font-size:51.00px;font-weight:700;color:#ffffff;transform:scaleX(0.8222);transform-origin:0 0;-webkit-text-stroke:1.1px #ffffff;">DELSLAB</div>
<svg class="a" style="left:2408px;top:150px;" width="48" height="52" viewBox="0 0 48 52"><path d="M23.5 4.5 V0" stroke="none"/><ellipse cx="23.5" cy="30.2" rx="13.6" ry="13.8" stroke="#ffffff" stroke-width="8.6" fill="none"/><rect x="15.5" y="8" width="16" height="16" fill="#292929"/><rect x="18.9" y="5.2" width="8.5" height="27" rx="4.2" fill="#ffffff"/></svg>
<div class="t" style="left:2294.62px;top:207px;font-size:36.00px;font-weight:400;color:#ffffff;transform:scaleX(1.0867);transform-origin:0 0;">T</div>
<div class="t" style="left:2335.87px;top:207px;font-size:36.00px;font-weight:400;color:#ffffff;transform:scaleX(1.1998);transform-origin:0 0;">e</div>
<div class="t" style="left:2379.53px;top:207px;font-size:36.00px;font-weight:400;color:#ffffff;transform:scaleX(1.1820);transform-origin:0 0;">m</div>
<div class="t" style="left:2435.94px;top:207px;font-size:36.00px;font-weight:400;color:#ffffff;transform:scaleX(1.2222);transform-origin:0 0;">p</div>
<div class="t" style="left:2479.58px;top:207px;font-size:36.00px;font-weight:400;color:#ffffff;transform:scaleX(1.4198);transform-origin:0 0;">l</div>
<div class="t" style="left:2510.39px;top:207px;font-size:36.00px;font-weight:400;color:#ffffff;transform:scaleX(0.9817);transform-origin:0 0;">a</div>
<div class="t" style="left:2553.29px;top:207px;font-size:36.00px;font-weight:400;color:#ffffff;transform:scaleX(1.3072);transform-origin:0 0;">t</div>
<div class="t" style="left:2587.98px;top:207px;font-size:36.00px;font-weight:400;color:#ffffff;transform:scaleX(1.1939);transform-origin:0 0;">e</div>
<div class="t" style="left:2630.10px;top:207px;font-size:36.00px;font-weight:400;color:#ffffff;transform:scaleX(1.2963);transform-origin:0 0;">s</div>
<svg class="a" style="left:2848px;top:252px;" width="19" height="12" viewBox="0 0 19 12"><path d="M3.0 3.0 L9.3 8.9 L15.5 3.0" stroke="#ffffff" stroke-width="2.1" fill="none" stroke-linecap="butt" stroke-linejoin="miter"/></svg>
<div class="a" style="left:53px;top:305px;width:2807px;height:1365px;background:#ffffff;"></div>
<div class="t" style="left:89.49px;top:308px;font-size:40.00px;font-weight:700;color:#222222;transform:scaleX(1.0296);transform-origin:0 0;">Top Revenue</div>
<div class="t" style="left:88.12px;top:352px;font-size:35.00px;font-weight:700;color:#000000;transform:scaleX(1.0043);transform-origin:0 0;">ABC Company Inc.</div>
<div class="t" style="left:86.68px;top:400px;font-size:22.00px;font-weight:700;color:#2f7ce8;transform:scaleX(1.0470);transform-origin:0 0;">Go to Table of Contents</div>
<div class="a" style="left:87px;top:419.5px;width:258px;height:2.1000000000000227px;background:#2f7ce8;"></div>
<div class="a" style="left:53px;top:459px;width:2807px;height:1px;background:#c8c8c8;"></div>
<div class="a" style="left:83px;top:460px;width:2764px;height:41.5px;background:#4b50d2;"></div>
<div class="a" style="left:603px;top:500.3px;width:1030px;height:1.1999999999999886px;background:#ffffff;"></div>
<div class="t" style="left:952.03px;top:464px;font-size:34.80px;font-weight:700;color:#ffffff;transform:scaleX(1.0603);transform-origin:0 0;">Top 5 Revenue Streams ($'000) - 5 years to December 2030</div>
<div class="a" style="left:83px;top:537.2px;width:1550px;height:27.399999999999977px;background:#6e72e6;"></div>
<div class="t" style="left:96.63px;top:540px;font-size:23.30px;font-weight:700;color:#ffffff;transform:scaleX(1.0046);transform-origin:0 0;">Year Ending</div>
<div class="a" style="left:603px;top:537px;width:1.2999999999999545px;height:28px;background:#ffffff;"></div>
<div class="t" style="left:680.02px;top:540px;font-size:23.00px;font-weight:700;color:#ffffff;transform:scaleX(1.0700);transform-origin:0 0;">2026</div>
<div class="a" style="left:809px;top:537px;width:1.2999999999999545px;height:28px;background:#ffffff;"></div>
<div class="t" style="left:886.08px;top:540px;font-size:23.00px;font-weight:700;color:#ffffff;transform:scaleX(1.0700);transform-origin:0 0;">2027</div>
<div class="a" style="left:1015px;top:537px;width:1.2999999999999545px;height:28px;background:#ffffff;"></div>
<div class="t" style="left:1091.96px;top:540px;font-size:23.00px;font-weight:700;color:#ffffff;transform:scaleX(1.0700);transform-origin:0 0;">2028</div>
<div class="a" style="left:1221px;top:537px;width:1.2999999999999545px;height:28px;background:#ffffff;"></div>
<div class="t" style="left:1298.02px;top:540px;font-size:23.00px;font-weight:700;color:#ffffff;transform:scaleX(1.0700);transform-origin:0 0;">2029</div>
<div class="a" style="left:1427px;top:537px;width:1.2999999999999545px;height:28px;background:#ffffff;"></div>
<div class="t" style="left:1504.08px;top:540px;font-size:23.00px;font-weight:700;color:#ffffff;transform:scaleX(1.0700);transform-origin:0 0;">2030</div>
<div class="a" style="left:1895.2px;top:537.2px;width:809.3px;height:27.399999999999977px;background:#6e72e6;"></div>
<div class="t" style="left:1949.22px;top:540px;font-size:23.00px;font-weight:700;color:#ffffff;transform:scaleX(1.0700);transform-origin:0 0;">2026</div>
<div class="a" style="left:2056.36px;top:537px;width:1.2999999999997272px;height:28px;background:#ffffff;"></div>
<div class="t" style="left:2111.14px;top:540px;font-size:23.00px;font-weight:700;color:#ffffff;transform:scaleX(1.0700);transform-origin:0 0;">2027</div>
<div class="a" style="left:2218.2200000000003px;top:537px;width:1.2999999999997272px;height:28px;background:#ffffff;"></div>
<div class="t" style="left:2272.88px;top:540px;font-size:23.00px;font-weight:700;color:#ffffff;transform:scaleX(1.0700);transform-origin:0 0;">2028</div>
<div class="a" style="left:2380.0800000000004px;top:537px;width:1.2999999999997272px;height:28px;background:#ffffff;"></div>
<div class="t" style="left:2434.80px;top:540px;font-size:23.00px;font-weight:700;color:#ffffff;transform:scaleX(1.0700);transform-origin:0 0;">2029</div>
<div class="a" style="left:2541.9400000000005px;top:537px;width:1.2999999999997272px;height:28px;background:#ffffff;"></div>
<div class="t" style="left:2596.72px;top:540px;font-size:23.00px;font-weight:700;color:#ffffff;transform:scaleX(1.0700);transform-origin:0 0;">2030</div>
<div class="t" style="left:85.33px;top:575px;font-size:23.40px;font-weight:400;color:#000000;transform:scaleX(0.9212);transform-origin:0 0;">Standard Rental Package</div>
<div class="t" style="left:762.18px;top:575px;font-size:23.00px;font-weight:400;color:#000;transform:scaleX(0.9850);transform-origin:0 0;">119</div>
<div class="t" style="left:1978.05px;top:575px;font-size:23.00px;font-weight:400;color:#000;transform:scaleX(1.0100);transform-origin:0 0;font-style:italic;">76.7%</div>
<div class="t" style="left:966.71px;top:575px;font-size:23.00px;font-weight:400;color:#000;transform:scaleX(0.9850);transform-origin:0 0;">267</div>
<div class="t" style="left:2139.91px;top:575px;font-size:23.00px;font-weight:400;color:#000;transform:scaleX(1.0100);transform-origin:0 0;font-style:italic;">74.9%</div>
<div class="t" style="left:1172.71px;top:575px;font-size:23.00px;font-weight:400;color:#000;transform:scaleX(0.9850);transform-origin:0 0;">442</div>
<div class="t" style="left:2301.77px;top:575px;font-size:23.00px;font-weight:400;color:#000;transform:scaleX(1.0100);transform-origin:0 0;font-style:italic;">73.2%</div>
<div class="t" style="left:1378.71px;top:575px;font-size:23.00px;font-weight:400;color:#000;transform:scaleX(0.9850);transform-origin:0 0;">722</div>
<div class="t" style="left:2463.63px;top:575px;font-size:23.00px;font-weight:400;color:#000;transform:scaleX(1.0100);transform-origin:0 0;font-style:italic;">71.5%</div>
<div class="t" style="left:1567.27px;top:575px;font-size:23.00px;font-weight:400;color:#000;transform:scaleX(0.9850);transform-origin:0 0;">1,115</div>
<div class="t" style="left:2625.49px;top:575px;font-size:23.00px;font-weight:400;color:#000;transform:scaleX(1.0100);transform-origin:0 0;font-style:italic;">69.8%</div>
<div class="t" style="left:85.22px;top:604px;font-size:23.40px;font-weight:400;color:#000000;transform:scaleX(0.9194);transform-origin:0 0;">Corporate Event Package</div>
<div class="t" style="left:772.95px;top:604px;font-size:23.00px;font-weight:400;color:#000;transform:scaleX(0.9850);transform-origin:0 0;">30</div>
<div class="t" style="left:1978.05px;top:604px;font-size:23.00px;font-weight:400;color:#000;transform:scaleX(1.0100);transform-origin:0 0;font-style:italic;">19.4%</div>
<div class="t" style="left:979.06px;top:604px;font-size:23.00px;font-weight:400;color:#000;transform:scaleX(0.9850);transform-origin:0 0;">76</div>
<div class="t" style="left:2139.91px;top:604px;font-size:23.00px;font-weight:400;color:#000;transform:scaleX(1.0100);transform-origin:0 0;font-style:italic;">21.2%</div>
<div class="t" style="left:1172.60px;top:604px;font-size:23.00px;font-weight:400;color:#000;transform:scaleX(0.9850);transform-origin:0 0;">139</div>
<div class="t" style="left:2301.77px;top:604px;font-size:23.00px;font-weight:400;color:#000;transform:scaleX(1.0100);transform-origin:0 0;font-style:italic;">23.0%</div>
<div class="t" style="left:1378.37px;top:604px;font-size:23.00px;font-weight:400;color:#000;transform:scaleX(0.9850);transform-origin:0 0;">250</div>
<div class="t" style="left:2463.63px;top:604px;font-size:23.00px;font-weight:400;color:#000;transform:scaleX(1.0100);transform-origin:0 0;font-style:italic;">24.7%</div>
<div class="t" style="left:1584.71px;top:604px;font-size:23.00px;font-weight:400;color:#000;transform:scaleX(0.9850);transform-origin:0 0;">422</div>
<div class="t" style="left:2625.49px;top:604px;font-size:23.00px;font-weight:400;color:#000;transform:scaleX(1.0100);transform-origin:0 0;font-style:italic;">26.4%</div>
<div class="t" style="left:86.30px;top:633px;font-size:23.40px;font-weight:400;color:#000000;transform:scaleX(0.9261);transform-origin:0 0;">Additional Hour Extension</div>
<div class="t" style="left:785.63px;top:633px;font-size:23.00px;font-weight:400;color:#000;transform:scaleX(0.9850);transform-origin:0 0;">6</div>
<div class="t" style="left:1990.94px;top:633px;font-size:23.00px;font-weight:400;color:#000;transform:scaleX(1.0100);transform-origin:0 0;font-style:italic;">3.9%</div>
<div class="t" style="left:978.83px;top:633px;font-size:23.00px;font-weight:400;color:#000;transform:scaleX(0.9850);transform-origin:0 0;">14</div>
<div class="t" style="left:2152.80px;top:633px;font-size:23.00px;font-weight:400;color:#000;transform:scaleX(1.0100);transform-origin:0 0;font-style:italic;">3.9%</div>
<div class="t" style="left:1185.06px;top:633px;font-size:23.00px;font-weight:400;color:#000;transform:scaleX(0.9850);transform-origin:0 0;">23</div>
<div class="t" style="left:2314.66px;top:633px;font-size:23.00px;font-weight:400;color:#000;transform:scaleX(1.0100);transform-origin:0 0;font-style:italic;">3.8%</div>
<div class="t" style="left:1391.06px;top:633px;font-size:23.00px;font-weight:400;color:#000;transform:scaleX(0.9850);transform-origin:0 0;">38</div>
<div class="t" style="left:2476.52px;top:633px;font-size:23.00px;font-weight:400;color:#000;transform:scaleX(1.0100);transform-origin:0 0;font-style:italic;">3.8%</div>
<div class="t" style="left:1596.95px;top:633px;font-size:23.00px;font-weight:400;color:#000;transform:scaleX(0.9850);transform-origin:0 0;">60</div>
<div class="t" style="left:2638.38px;top:633px;font-size:23.00px;font-weight:400;color:#000;transform:scaleX(1.0100);transform-origin:0 0;font-style:italic;">3.8%</div>
<div class="a" style="left:87px;top:673px;width:5.700000000000003px;height:2.2999999999999545px;background:#000;"></div>
<div class="a" style="left:766.6px;top:672.7px;width:6.699999999999932px;height:2.3999999999999773px;background:#000;"></div>
<div class="a" style="left:2037.26px;top:672.7px;width:6.7000000000000455px;height:2.3999999999999773px;background:#000;"></div>
<div class="a" style="left:972.6px;top:672.7px;width:6.699999999999932px;height:2.3999999999999773px;background:#000;"></div>
<div class="a" style="left:2199.12px;top:672.7px;width:6.700000000000273px;height:2.3999999999999773px;background:#000;"></div>
<div class="a" style="left:1178.6px;top:672.7px;width:6.7000000000000455px;height:2.3999999999999773px;background:#000;"></div>
<div class="a" style="left:2360.98px;top:672.7px;width:6.700000000000273px;height:2.3999999999999773px;background:#000;"></div>
<div class="a" style="left:1384.6px;top:672.7px;width:6.7000000000000455px;height:2.3999999999999773px;background:#000;"></div>
<div class="a" style="left:2522.84px;top:672.7px;width:6.700000000000273px;height:2.3999999999999773px;background:#000;"></div>
<div class="a" style="left:1590.6px;top:672.7px;width:6.7000000000000455px;height:2.3999999999999773px;background:#000;"></div>
<div class="a" style="left:2684.7px;top:672.7px;width:6.700000000000273px;height:2.3999999999999773px;background:#000;"></div>
<div class="t" style="left:85.32px;top:691px;font-size:23.40px;font-weight:400;color:#000000;transform:scaleX(0.9345);transform-origin:0 0;">Other Revenue</div>
<div class="a" style="left:766.6px;top:701.6px;width:6.699999999999932px;height:2.3999999999999773px;background:#000;"></div>
<div class="a" style="left:2037.26px;top:701.6px;width:6.7000000000000455px;height:2.3999999999999773px;background:#000;"></div>
<div class="a" style="left:972.6px;top:701.6px;width:6.699999999999932px;height:2.3999999999999773px;background:#000;"></div>
<div class="a" style="left:2199.12px;top:701.6px;width:6.700000000000273px;height:2.3999999999999773px;background:#000;"></div>
<div class="a" style="left:1178.6px;top:701.6px;width:6.7000000000000455px;height:2.3999999999999773px;background:#000;"></div>
<div class="a" style="left:2360.98px;top:701.6px;width:6.700000000000273px;height:2.3999999999999773px;background:#000;"></div>
<div class="a" style="left:1384.6px;top:701.6px;width:6.7000000000000455px;height:2.3999999999999773px;background:#000;"></div>
<div class="a" style="left:2522.84px;top:701.6px;width:6.700000000000273px;height:2.3999999999999773px;background:#000;"></div>
<div class="a" style="left:1590.6px;top:701.6px;width:6.7000000000000455px;height:2.3999999999999773px;background:#000;"></div>
<div class="a" style="left:2684.7px;top:701.6px;width:6.700000000000273px;height:2.3999999999999773px;background:#000;"></div>
<div class="a" style="left:82px;top:716.2px;width:1552px;height:29.399999999999977px;background:#4bb3e7;"></div>
<div class="t" style="left:98.13px;top:719px;font-size:27.00px;font-weight:700;color:#ffffff;transform:scaleX(0.9834);transform-origin:0 0;">Total Revenue</div>
<div class="t" style="left:751.68px;top:720px;font-size:23.00px;font-weight:700;color:#ffffff;transform:scaleX(1.1300);transform-origin:0 0;">155</div>
<div class="t" style="left:958.07px;top:720px;font-size:23.00px;font-weight:700;color:#ffffff;transform:scaleX(1.1300);transform-origin:0 0;">357</div>
<div class="t" style="left:1163.16px;top:720px;font-size:23.00px;font-weight:700;color:#ffffff;transform:scaleX(1.1300);transform-origin:0 0;">604</div>
<div class="t" style="left:1348.36px;top:720px;font-size:23.00px;font-weight:700;color:#ffffff;transform:scaleX(1.1300);transform-origin:0 0;">1,010</div>
<div class="t" style="left:1554.36px;top:720px;font-size:23.00px;font-weight:700;color:#ffffff;transform:scaleX(1.1300);transform-origin:0 0;">1,597</div>
<div class="a" style="left:1894.5px;top:716.2px;width:810.5px;height:29.399999999999977px;background:#4bb3e7;"></div>
<div class="t" style="left:1983.14px;top:720px;font-size:23.00px;font-weight:700;color:#ffffff;transform:scaleX(1.1500);transform-origin:0 0;font-style:italic;">100%</div>
<div class="t" style="left:2145.00px;top:720px;font-size:23.00px;font-weight:700;color:#ffffff;transform:scaleX(1.1500);transform-origin:0 0;font-style:italic;">100%</div>
<div class="t" style="left:2306.86px;top:720px;font-size:23.00px;font-weight:700;color:#ffffff;transform:scaleX(1.1500);transform-origin:0 0;font-style:italic;">100%</div>
<div class="t" style="left:2468.72px;top:720px;font-size:23.00px;font-weight:700;color:#ffffff;transform:scaleX(1.1500);transform-origin:0 0;font-style:italic;">100%</div>
<div class="t" style="left:2630.58px;top:720px;font-size:23.00px;font-weight:700;color:#ffffff;transform:scaleX(1.1500);transform-origin:0 0;font-style:italic;">100%</div>
<div class="a" style="left:83px;top:767.1px;width:2764px;height:41.89999999999998px;background:#4b50d2;"></div>
<div class="t" style="left:951.53px;top:773px;font-size:34.80px;font-weight:700;color:#ffffff;transform:scaleX(1.0603);transform-origin:0 0;">Top 5 Revenue Streams ($'000) - 5 years to December 2030</div>
<div class="a" style="left:83px;top:1534.9px;width:2764px;height:41.799999999999955px;background:#4b50d2;"></div>
<div class="a" style="left:1839px;top:1534.9px;width:1.5px;height:41.799999999999955px;background:#ffffff;"></div>
<div class="t" style="left:698.53px;top:1541px;font-size:34.80px;font-weight:700;color:#ffffff;transform:scaleX(1.0903);transform-origin:0 0;">Revenue Depth ($'000) - 2026</div>
<div class="t" style="left:2056.73px;top:1541px;font-size:34.80px;font-weight:700;color:#ffffff;transform:scaleX(1.0940);transform-origin:0 0;">Monthly Run-Rate ($'000) - 2026</div>
<div class="a" style="left:2541.7px;top:1577.6px;width:305.3px;height:28px;background:#fff06b;border:1px solid #d9d9d9"></div>
<div class="t" style="left:2666.81px;top:1581px;font-size:23.00px;font-weight:700;color:#111111;transform:scaleX(1.1016);transform-origin:0 0;">2026</div>
<div class="a" style="left:83px;top:1617.7px;width:1494px;height:1.2000000000000455px;background:#5ab4de;"></div>
<svg class="a" style="left:0px;top:0px;" width="1700" height="1600" viewBox="0 0 1700 1600"><rect x="176.4" y="850.80" width="1456.6" height="1.2" fill="#5470a6"/><rect x="176.4" y="914.60" width="1456.6" height="1.2" fill="#5470a6"/><rect x="176.4" y="978.40" width="1456.6" height="1.2" fill="#5470a6"/><rect x="176.4" y="1042.20" width="1456.6" height="1.2" fill="#5470a6"/><rect x="176.4" y="1106.00" width="1456.6" height="1.2" fill="#5470a6"/><rect x="176.4" y="1169.80" width="1456.6" height="1.2" fill="#5470a6"/><rect x="176.4" y="1233.60" width="1456.6" height="1.2" fill="#5470a6"/><rect x="176.4" y="1297.40" width="1456.6" height="1.2" fill="#5470a6"/><rect x="176.4" y="1361.20" width="1456.6" height="1.2" fill="#5470a6"/><rect x="176.4" y="1425.00" width="1456.6" height="1.2" fill="#5470a6"/><rect x="176.4" y="1488.80" width="1456.6" height="1.2" fill="#5470a6"/></svg>
<div class="t" style="left:85.97px;top:841px;font-size:22.60px;font-weight:700;color:#000;transform:scaleX(1.1980);transform-origin:0 0;">100%</div>
<div class="t" style="left:99.12px;top:905px;font-size:22.60px;font-weight:700;color:#000;transform:scaleX(1.2430);transform-origin:0 0;">90%</div>
<div class="t" style="left:99.12px;top:969px;font-size:22.60px;font-weight:700;color:#000;transform:scaleX(1.2430);transform-origin:0 0;">80%</div>
<div class="t" style="left:99.12px;top:1033px;font-size:22.60px;font-weight:700;color:#000;transform:scaleX(1.2430);transform-origin:0 0;">70%</div>
<div class="t" style="left:99.12px;top:1096px;font-size:22.60px;font-weight:700;color:#000;transform:scaleX(1.2430);transform-origin:0 0;">60%</div>
<div class="t" style="left:99.12px;top:1160px;font-size:22.60px;font-weight:700;color:#000;transform:scaleX(1.2430);transform-origin:0 0;">50%</div>
<div class="t" style="left:99.12px;top:1224px;font-size:22.60px;font-weight:700;color:#000;transform:scaleX(1.2430);transform-origin:0 0;">40%</div>
<div class="t" style="left:99.12px;top:1288px;font-size:22.60px;font-weight:700;color:#000;transform:scaleX(1.2430);transform-origin:0 0;">30%</div>
<div class="t" style="left:99.12px;top:1352px;font-size:22.60px;font-weight:700;color:#000;transform:scaleX(1.2430);transform-origin:0 0;">20%</div>
<div class="t" style="left:99.12px;top:1415px;font-size:22.60px;font-weight:700;color:#000;transform:scaleX(1.2430);transform-origin:0 0;">10%</div>
<div class="t" style="left:113.65px;top:1479px;font-size:22.60px;font-weight:700;color:#000;transform:scaleX(1.2760);transform-origin:0 0;">0%</div>
<div class="a" style="left:225.2px;top:999.5806451612904px;width:194.2px;height:489.8193548387097px;background:#4cb3e8;"></div>
<div class="a" style="left:225.2px;top:876.0967741935484px;width:194.2px;height:123.48387096774195px;background:#4b50d2;"></div>
<div class="a" style="left:225.2px;top:852.0px;width:194.2px;height:24.096774193548413px;background:#f07a6e;"></div>
<div class="a" style="left:291.61257499999994px;top:1226.590322580645px;width:61.37485000000004px;height:35.80000000000018px;background:#dde8f5;"></div>
<div class="t" style="left:301.05px;top:1234px;font-size:22.60px;font-weight:700;color:#000;transform:scaleX(1.1500);transform-origin:0 0;">119</div>
<div class="a" style="left:297.72022499999997px;top:919.9387096774194px;width:49.15954999999997px;height:35.799999999999955px;background:#aaadeb;"></div>
<div class="t" style="left:311.07px;top:928px;font-size:22.60px;font-weight:700;color:#000;transform:scaleX(1.1500);transform-origin:0 0;">30</div>
<div class="a" style="left:304.99742499999996px;top:846.1483870967742px;width:34.60514999999998px;height:35.799999999999955px;background:#f8cbad;"></div>
<div class="t" style="left:315.09px;top:855px;font-size:22.60px;font-weight:700;color:#000;transform:scaleX(1.1500);transform-origin:0 0;">6</div>
<div class="a" style="left:305.127375px;top:834.1px;width:34.345249999999965px;height:35.799999999999955px;background:#e2efda;"></div>
<div class="t" style="left:315.09px;top:842px;font-size:22.60px;font-weight:700;color:#000;transform:scaleX(1.1500);transform-origin:0 0;">0</div>
<div class="t" style="left:293.39px;top:1508px;font-size:22.60px;font-weight:700;color:#000;transform:scaleX(1.1500);transform-origin:0 0;">2026</div>
<div class="a" style="left:516.4px;top:1012.2403361344539px;width:194.19999999999993px;height:477.15966386554624px;background:#4cb3e8;"></div>
<div class="a" style="left:516.4px;top:876.4196078431373px;width:194.19999999999993px;height:135.82072829131653px;background:#4b50d2;"></div>
<div class="a" style="left:516.4px;top:852.0px;width:194.19999999999993px;height:24.419607843137328px;background:#f07a6e;"></div>
<div class="a" style="left:581.83795px;top:1232.9201680672268px;width:63.324100000000044px;height:35.80000000000018px;background:#dde8f5;"></div>
<div class="t" style="left:591.93px;top:1241px;font-size:22.60px;font-weight:700;color:#000;transform:scaleX(1.1500);transform-origin:0 0;">267</div>
<div class="a" style="left:589.050175px;top:926.4299719887956px;width:48.899650000000065px;height:35.799999999999955px;background:#aaadeb;"></div>
<div class="t" style="left:602.01px;top:934px;font-size:22.60px;font-weight:700;color:#000;transform:scaleX(1.1500);transform-origin:0 0;">76</div>
<div class="a" style="left:588.920225px;top:846.3098039215687px;width:49.15955000000008px;height:35.799999999999955px;background:#f8cbad;"></div>
<div class="t" style="left:598.36px;top:855px;font-size:22.60px;font-weight:700;color:#000;transform:scaleX(1.1500);transform-origin:0 0;">14</div>
<div class="a" style="left:596.327375px;top:834.1px;width:34.34525000000008px;height:35.799999999999955px;background:#e2efda;"></div>
<div class="t" style="left:606.29px;top:842px;font-size:22.60px;font-weight:700;color:#000;transform:scaleX(1.1500);transform-origin:0 0;">0</div>
<div class="t" style="left:584.65px;top:1508px;font-size:22.60px;font-weight:700;color:#000;transform:scaleX(1.1500);transform-origin:0 0;">2027</div>
<div class="a" style="left:807.5999999999999px;top:1022.5192052980133px;width:194.20000000000005px;height:466.8807947019868px;background:#4cb3e8;"></div>
<div class="a" style="left:807.5999999999999px;top:875.694701986755px;width:194.20000000000005px;height:146.82450331125824px;background:#4b50d2;"></div>
<div class="a" style="left:807.5999999999999px;top:852.0px;width:194.20000000000005px;height:23.694701986755035px;background:#f07a6e;"></div>
<div class="a" style="left:872.7780499999999px;top:1238.0596026490066px;width:63.843900000000076px;height:35.80000000000018px;background:#dde8f5;"></div>
<div class="t" style="left:883.39px;top:1246px;font-size:22.60px;font-weight:700;color:#000;transform:scaleX(1.1500);transform-origin:0 0;">442</div>
<div class="a" style="left:873.2978499999999px;top:931.2069536423842px;width:62.80430000000001px;height:35.799999999999955px;background:#aaadeb;"></div>
<div class="t" style="left:885.74px;top:939px;font-size:22.60px;font-weight:700;color:#000;transform:scaleX(1.1500);transform-origin:0 0;">139</div>
<div class="a" style="left:880.1851999999999px;top:845.9473509933774px;width:49.02960000000007px;height:35.799999999999955px;background:#f8cbad;"></div>
<div class="t" style="left:890.28px;top:855px;font-size:22.60px;font-weight:700;color:#000;transform:scaleX(1.1500);transform-origin:0 0;">23</div>
<div class="a" style="left:887.5273749999999px;top:834.1px;width:34.34525000000008px;height:35.799999999999955px;background:#e2efda;"></div>
<div class="t" style="left:897.49px;top:842px;font-size:22.60px;font-weight:700;color:#000;transform:scaleX(1.1500);transform-origin:0 0;">0</div>
<div class="t" style="left:875.72px;top:1508px;font-size:22.60px;font-weight:700;color:#000;transform:scaleX(1.1500);transform-origin:0 0;">2028</div>
<div class="a" style="left:1098.8px;top:1033.3247524752476px;width:194.20000000000005px;height:456.0752475247525px;background:#4cb3e8;"></div>
<div class="a" style="left:1098.8px;top:875.4039603960396px;width:194.20000000000005px;height:157.920792079208px;background:#4b50d2;"></div>
<div class="a" style="left:1098.8px;top:852.0px;width:194.20000000000005px;height:23.403960396039565px;background:#f07a6e;"></div>
<div class="a" style="left:1164.302925px;top:1243.4623762376236px;width:63.19414999999981px;height:35.80000000000018px;background:#dde8f5;"></div>
<div class="t" style="left:1174.26px;top:1251px;font-size:22.60px;font-weight:700;color:#000;transform:scaleX(1.1500);transform-origin:0 0;">722</div>
<div class="a" style="left:1164.23795px;top:936.4643564356436px;width:63.32409999999982px;height:35.799999999999955px;background:#aaadeb;"></div>
<div class="t" style="left:1177.33px;top:944px;font-size:22.60px;font-weight:700;color:#000;transform:scaleX(1.1500);transform-origin:0 0;">250</div>
<div class="a" style="left:1171.190275px;top:845.8019801980198px;width:49.41944999999987px;height:35.799999999999955px;background:#f8cbad;"></div>
<div class="t" style="left:1181.54px;top:854px;font-size:22.60px;font-weight:700;color:#000;transform:scaleX(1.1500);transform-origin:0 0;">38</div>
<div class="a" style="left:1178.727375px;top:834.1px;width:34.34524999999985px;height:35.799999999999955px;background:#e2efda;"></div>
<div class="t" style="left:1188.69px;top:842px;font-size:22.60px;font-weight:700;color:#000;transform:scaleX(1.1500);transform-origin:0 0;">0</div>
<div class="t" style="left:1166.99px;top:1508px;font-size:22.60px;font-weight:700;color:#000;transform:scaleX(1.1500);transform-origin:0 0;">2029</div>
<div class="a" style="left:1390.0px;top:1043.9585472761428px;width:194.20000000000005px;height:445.4414527238573px;background:#4cb3e8;"></div>
<div class="a" style="left:1390.0px;top:875.3699436443331px;width:194.20000000000005px;height:168.58860363180963px;background:#4b50d2;"></div>
<div class="a" style="left:1390.0px;top:852.0px;width:194.20000000000005px;height:23.369943644333148px;background:#f07a6e;"></div>
<div class="a" style="left:1445.4317999999998px;top:1248.7792736380713px;width:83.33640000000014px;height:35.80000000000018px;background:#dde8f5;"></div>
<div class="t" style="left:1454.87px;top:1256px;font-size:22.60px;font-weight:700;color:#000;transform:scaleX(1.1500);transform-origin:0 0;">1,115</div>
<div class="a" style="left:1455.17805px;top:941.7642454602379px;width:63.84389999999985px;height:35.799999999999955px;background:#aaadeb;"></div>
<div class="t" style="left:1468.79px;top:949px;font-size:22.60px;font-weight:700;color:#000;transform:scaleX(1.1500);transform-origin:0 0;">422</div>
<div class="a" style="left:1462.650175px;top:845.7849718221665px;width:48.89964999999984px;height:35.799999999999955px;background:#f8cbad;"></div>
<div class="t" style="left:1472.74px;top:854px;font-size:22.60px;font-weight:700;color:#000;transform:scaleX(1.1500);transform-origin:0 0;">60</div>
<div class="a" style="left:1469.927375px;top:834.1px;width:34.34524999999985px;height:35.799999999999955px;background:#e2efda;"></div>
<div class="t" style="left:1479.89px;top:842px;font-size:22.60px;font-weight:700;color:#000;transform:scaleX(1.1500);transform-origin:0 0;">0</div>
<div class="t" style="left:1458.25px;top:1508px;font-size:22.60px;font-weight:700;color:#000;transform:scaleX(1.1500);transform-origin:0 0;">2030</div>
<svg class="a" style="left:0px;top:0px;" width="2902" height="1600" viewBox="0 0 2902 1600"><rect x="2069.7" y="850.60" width="776.3" height="1.3" fill="#7cc2e4"/><rect x="2069.7" y="956.60" width="776.3" height="1.3" fill="#7cc2e4"/><rect x="2069.7" y="1062.60" width="776.3" height="1.3" fill="#7cc2e4"/><rect x="2069.7" y="1168.60" width="776.3" height="1.3" fill="#7cc2e4"/><rect x="2069.7" y="1274.60" width="776.3" height="1.3" fill="#7cc2e4"/><rect x="2069.7" y="1380.60" width="776.3" height="1.3" fill="#7cc2e4"/><rect x="2069.7" y="1486.60" width="776.3" height="1.3" fill="#7cc2e4"/><polyline points="2146.3,1487.2 2302.2,1487.2 2458.1,1487.2 2614.0,1487.2 2769.9,1487.2" fill="none" stroke="#e8b320" stroke-width="3.9" stroke-linejoin="round"/><polyline points="2146.3,1484.0 2302.2,1479.8 2458.1,1475.0 2614.0,1467.1 2769.9,1455.4" fill="none" stroke="#f07a6e" stroke-width="3.9" stroke-linejoin="round"/><path d="M2137.8 1490.5 L2146.3 1475.0 L2154.8 1490.5 Z" fill="#f07a6e"/><path d="M2293.7 1486.3 L2302.2 1470.8 L2310.7 1486.3 Z" fill="#f07a6e"/><path d="M2449.6 1481.5 L2458.1 1466.0 L2466.6 1481.5 Z" fill="#f07a6e"/><path d="M2605.5 1473.6 L2614.0 1458.1 L2622.5 1473.6 Z" fill="#f07a6e"/><path d="M2761.4 1461.9 L2769.9 1446.4 L2778.4 1461.9 Z" fill="#f07a6e"/><polyline points="2146.3,1471.3 2302.2,1446.9 2458.1,1413.5 2614.0,1354.7 2769.9,1263.5" fill="none" stroke="#4b50d2" stroke-width="3.9" stroke-linejoin="round"/><rect x="2137.8" y="1462.8" width="17" height="17" fill="#4b50d2"/><rect x="2293.7" y="1438.4" width="17" height="17" fill="#4b50d2"/><rect x="2449.6" y="1405.0" width="17" height="17" fill="#4b50d2"/><rect x="2605.5" y="1346.2" width="17" height="17" fill="#4b50d2"/><rect x="2761.4" y="1255.0" width="17" height="17" fill="#4b50d2"/><polyline points="2146.3,1424.1 2302.2,1345.7 2458.1,1252.9 2614.0,1104.5 2769.9,896.2" fill="none" stroke="#4cb3e8" stroke-width="3.9" stroke-linejoin="round"/><circle cx="2146.3" cy="1424.1" r="7.3" fill="#4cb3e8"/><circle cx="2302.2" cy="1345.7" r="7.3" fill="#4cb3e8"/><circle cx="2458.1" cy="1252.9" r="7.3" fill="#4cb3e8"/><circle cx="2614.0" cy="1104.5" r="7.3" fill="#4cb3e8"/><circle cx="2769.9" cy="896.2" r="7.3" fill="#4cb3e8"/><polyline points="2146.3,1487.2 2302.2,1487.2 2458.1,1487.2 2614.0,1487.2 2769.9,1487.2" fill="none" stroke="#2fb5a5" stroke-width="4.6" stroke-linejoin="round"/><rect x="2137.8" y="1478.7" width="17" height="17" fill="#2db5a3"/><rect x="2293.7" y="1478.7" width="17" height="17" fill="#2db5a3"/><rect x="2449.6" y="1478.7" width="17" height="17" fill="#2db5a3"/><rect x="2605.5" y="1478.7" width="17" height="17" fill="#2db5a3"/><rect x="2761.4" y="1478.7" width="17" height="17" fill="#2db5a3"/><path d="M1671.2 888.75 H1723.8" stroke="#4cb3e8" stroke-width="4.3" stroke-linecap="round"/><circle cx="1696.6" cy="888.75" r="5.2" fill="#4cb3e8"/><path d="M1671.2 1020.7 H1723.8" stroke="#4b50d2" stroke-width="4.3" stroke-linecap="round"/><rect x="1691.3" y="1015.4000000000001" width="10.6" height="10.6" fill="#4b50d2"/><path d="M1671.2 1152.7 H1723.8" stroke="#f07a6e" stroke-width="4.3" stroke-linecap="round"/><path d="M1690.8 1157.7 L1696.6 1146.7 L1702.4 1157.7 Z" fill="#f07a6e"/><path d="M1671.2 1284.7 H1723.8" stroke="#e8b320" stroke-width="4.3" stroke-linecap="round"/><path d="M1691.5 1279.2 L1701.5 1290.2 M1701.5 1279.2 L1691.5 1290.2" stroke="#e8b320" stroke-width="1.4"/><path d="M1671.2 1416.8 H1723.8" stroke="#2fb5a5" stroke-width="4.3" stroke-linecap="round"/><rect x="1691.6" y="1411.5" width="10.6" height="10.6" fill="#58ad6d"/></svg>
<div class="t" style="left:1977.45px;top:841px;font-size:22.60px;font-weight:700;color:#000;transform:scaleX(1.1340);transform-origin:0 0;">1,200</div>
<div class="t" style="left:1977.45px;top:947px;font-size:22.60px;font-weight:700;color:#000;transform:scaleX(1.1340);transform-origin:0 0;">1,000</div>
<div class="t" style="left:1998.85px;top:1053px;font-size:22.60px;font-weight:700;color:#000;transform:scaleX(1.1340);transform-origin:0 0;">800</div>
<div class="t" style="left:1998.85px;top:1159px;font-size:22.60px;font-weight:700;color:#000;transform:scaleX(1.1340);transform-origin:0 0;">600</div>
<div class="t" style="left:1998.85px;top:1265px;font-size:22.60px;font-weight:700;color:#000;transform:scaleX(1.1340);transform-origin:0 0;">400</div>
<div class="t" style="left:1998.85px;top:1371px;font-size:22.60px;font-weight:700;color:#000;transform:scaleX(1.1340);transform-origin:0 0;">200</div>
<div class="a" style="left:2033.8px;top:1485.9px;width:6.7000000000000455px;height:2.599999999999909px;background:#000;"></div>
<div class="t" style="left:2119.34px;top:1506px;font-size:22.60px;font-weight:700;color:#000;transform:scaleX(1.1200);transform-origin:0 0;">2026</div>
<div class="t" style="left:2275.30px;top:1506px;font-size:22.60px;font-weight:700;color:#000;transform:scaleX(1.1200);transform-origin:0 0;">2027</div>
<div class="t" style="left:2431.08px;top:1506px;font-size:22.60px;font-weight:700;color:#000;transform:scaleX(1.1200);transform-origin:0 0;">2028</div>
<div class="t" style="left:2587.04px;top:1506px;font-size:22.60px;font-weight:700;color:#000;transform:scaleX(1.1200);transform-origin:0 0;">2029</div>
<div class="t" style="left:2743.00px;top:1506px;font-size:22.60px;font-weight:700;color:#000;transform:scaleX(1.1200);transform-origin:0 0;">2030</div>
<div class="t" style="left:1730.28px;top:878px;font-size:23.10px;font-weight:700;color:#000;transform:scaleX(1.0334);transform-origin:0 0;">Standard Rental</div>
<div class="t" style="left:1729.48px;top:905px;font-size:23.10px;font-weight:700;color:#000;transform:scaleX(1.0123);transform-origin:0 0;">Package</div>
<div class="t" style="left:1730.06px;top:1009px;font-size:23.10px;font-weight:700;color:#000;transform:scaleX(1.0143);transform-origin:0 0;">Corporate Event</div>
<div class="t" style="left:1729.48px;top:1037px;font-size:23.10px;font-weight:700;color:#000;transform:scaleX(1.0145);transform-origin:0 0;">Package</div>
<div class="t" style="left:1730.41px;top:1141px;font-size:23.10px;font-weight:700;color:#000;transform:scaleX(1.0190);transform-origin:0 0;">Additional Hour</div>
<div class="t" style="left:1729.49px;top:1169px;font-size:23.10px;font-weight:700;color:#000;transform:scaleX(1.0044);transform-origin:0 0;">Extension</div>
<div class="t" style="left:1730.05px;top:1406px;font-size:23.10px;font-weight:700;color:#000;transform:scaleX(1.0289);transform-origin:0 0;">Other Revenue</div>
<div class="a" style="left:1731.8px;top:1283.4px;width:6.2000000000000455px;height:2.7999999999999545px;background:#000;"></div>
<div class="a" style="left:1645px;top:1646px;width:12px;height:11px;background:#4cb3e8;"></div>
<div class="t" style="left:1661.28px;top:1640px;font-size:23.10px;font-weight:700;color:#000;transform:scaleX(1.0385);transform-origin:0 0;">Standard Rental</div>
<div class="a" style="left:1703.5px;top:1668px;width:3.0px;height:2px;background:#000;"></div>
<div class="a" style="left:2351.7px;top:1619px;width:79.3px;height:34.6px;border:2px solid #595959;background:#fff"></div>
<div class="t" style="left:2362.25px;top:1626px;font-size:22.60px;font-weight:700;color:#000;transform:scaleX(1.1200);transform-origin:0 0;">0.0%</div>
<div class="a" style="left:2141.6px;top:1643.8px;width:79.4px;height:34.6px;border:2px solid #595959;background:#fff"></div>
<div class="t" style="left:2152.44px;top:1651px;font-size:22.60px;font-weight:700;color:#000;transform:scaleX(1.1200);transform-origin:0 0;">3.9%</div>
<div class="a" style="left:2334.6px;top:1657.5px;width:79.4px;height:34.6px;border:2px solid #595959;background:#fff"></div>
<div class="t" style="left:2345.25px;top:1665px;font-size:22.60px;font-weight:700;color:#000;transform:scaleX(1.1200);transform-origin:0 0;">0.0%</div>
<svg class="a" style="left:2220px;top:1650px;" width="60" height="30" viewBox="0 0 60 30"><path d="M1 10 H17 L40 20" stroke="#595959" stroke-width="1.3" fill="none"/></svg>
<svg class="a" style="left:2370px;top:1652px;" width="10" height="8" viewBox="0 0 10 8"><path d="M5 1 V6" stroke="#595959" stroke-width="1.3"/></svg>
<div class="a" style="left:1860px;top:1666px;width:185px;height:16px;background:#ffffff;"></div>
<div class="a" style="left:11px;top:1670px;width:1864px;height:48px;background:#0a0a0a;border-top-right-radius:8px"></div>
<div class="a" style="left:2026.6px;top:1670px;width:864.4000000000001px;height:48px;background:#0a0a0a;border-top-left-radius:8px"></div>
<div class="a" style="left:1875px;top:1700px;width:151.5999999999999px;height:18px;background:#0a0a0a;"></div>
<div class="a" style="left:11px;top:1670px;width:1856px;height:1px;background:#3a3a3a;"></div>
<div class="a" style="left:2035px;top:1670px;width:825px;height:1px;background:#3a3a3a;"></div>
<div class="a" style="left:2860px;top:278px;width:31px;height:1392px;background:#141414;"></div>
<svg class="a" style="left:2866px;top:284px;" width="20" height="16" viewBox="0 0 20 16"><path d="M3.5 12.5 L10 4 L16.5 12.5 Z" fill="#a0a0a0" stroke="#a0a0a0" stroke-width="2" stroke-linejoin="round"/></svg>
<div class="a" style="left:2871px;top:304px;width:10px;height:565px;background:#a0a0a0;border-radius:5px"></div>
<svg class="a" style="left:2866px;top:1651px;" width="20" height="16" viewBox="0 0 20 16"><path d="M3.5 3.5 L10 12 L16.5 3.5 Z" fill="#a0a0a0" stroke="#a0a0a0" stroke-width="2" stroke-linejoin="round"/></svg>
<svg class="a" style="left:43px;top:1683px;" width="16" height="20" viewBox="0 0 16 20"><path d="M11.5 3 L4 10 L11.5 17" stroke="#d8d8d8" stroke-width="1.5" fill="none"/></svg>
<svg class="a" style="left:91px;top:1683px;" width="16" height="20" viewBox="0 0 16 20"><path d="M4 3 L11.5 10 L4 17" stroke="#d8d8d8" stroke-width="1.5" fill="none"/></svg>
<div class="a" style="left:137.7px;top:1690.6px;width:4.6px;height:4.6px;border-radius:50%;background:#d8d8d8"></div>
<div class="a" style="left:143.9px;top:1690.6px;width:4.6px;height:4.6px;border-radius:50%;background:#d8d8d8"></div>
<div class="a" style="left:150.1px;top:1690.6px;width:4.6px;height:4.6px;border-radius:50%;background:#d8d8d8"></div>
<div class="a" style="left:177.3px;top:1676px;width:88.7px;height:36px;background:#fee96e;border-radius:6px"></div>
<div class="t" style="left:189.86px;top:1685px;font-size:21.00px;font-weight:400;color:#101010;transform:scaleX(0.9786);transform-origin:0 0;">Payroll</div>
<div class="a" style="left:279.3px;top:1676px;width:86.7px;height:36px;background:#fee96e;border-radius:6px"></div>
<div class="t" style="left:292.10px;top:1685px;font-size:21.00px;font-weight:400;color:#101010;transform:scaleX(0.8577);transform-origin:0 0;">CAPEX</div>
<div class="a" style="left:272.15px;top:1680px;width:1.0px;height:27.5px;background:#555555;"></div>
<div class="a" style="left:379.2px;top:1676px;width:112.6px;height:36px;background:#fee96e;border-radius:6px"></div>
<div class="t" style="left:391.37px;top:1685px;font-size:21.00px;font-weight:400;color:#101010;transform:scaleX(0.9824);transform-origin:0 0;">CapTable</div>
<div class="a" style="left:372.1px;top:1680px;width:1.0px;height:27.5px;background:#555555;"></div>
<div class="a" style="left:505.0px;top:1676px;width:90.0px;height:36px;background:#fee96e;border-radius:6px"></div>
<div class="t" style="left:517.65px;top:1685px;font-size:21.00px;font-weight:400;color:#101010;transform:scaleX(1.0001);transform-origin:0 0;">Capital</div>
<div class="a" style="left:497.9px;top:1680px;width:1.0px;height:27.5px;background:#555555;"></div>
<div class="a" style="left:608.0px;top:1676px;width:41.8px;height:36px;background:#4db3e8;border-radius:6px"></div>
<div class="t" style="left:620.78px;top:1685px;font-size:21.00px;font-weight:400;color:#101010;transform:scaleX(0.8583);transform-origin:0 0;">IS</div>
<div class="a" style="left:601.0px;top:1680px;width:1.0px;height:27.5px;background:#555555;"></div>
<div class="a" style="left:662.7px;top:1676px;width:48.3px;height:36px;background:#4db3e8;border-radius:6px"></div>
<div class="t" style="left:675.18px;top:1685px;font-size:21.00px;font-weight:400;color:#101010;transform:scaleX(0.8756);transform-origin:0 0;">CF</div>
<div class="a" style="left:655.75px;top:1680px;width:1.0px;height:27.5px;background:#555555;"></div>
<div class="a" style="left:724.2px;top:1676px;width:47.7px;height:36px;background:#4db3e8;border-radius:6px"></div>
<div class="t" style="left:736.35px;top:1685px;font-size:21.00px;font-weight:400;color:#101010;transform:scaleX(0.8654);transform-origin:0 0;">BS</div>
<div class="a" style="left:717.1px;top:1680px;width:1.0px;height:27.5px;background:#555555;"></div>
<div class="a" style="left:785.1px;top:1676px;width:114.7px;height:36px;background:#4db3e8;border-radius:6px"></div>
<div class="t" style="left:797.80px;top:1685px;font-size:21.00px;font-weight:400;color:#101010;transform:scaleX(0.9480);transform-origin:0 0;">Scenarios</div>
<div class="a" style="left:778.0px;top:1680px;width:1.0px;height:27.5px;background:#555555;"></div>
<div class="a" style="left:913.4px;top:1676px;width:114.0px;height:36px;background:#4db3e8;border-radius:6px"></div>
<div class="t" style="left:927.09px;top:1685px;font-size:21.00px;font-weight:400;color:#101010;transform:scaleX(1.0175);transform-origin:0 0;">Valuation</div>
<div class="a" style="left:906.0999999999999px;top:1680px;width:1.0px;height:27.5px;background:#555555;"></div>
<div class="a" style="left:1040.8px;top:1676px;width:113.7px;height:36px;background:#4db3e8;border-radius:6px"></div>
<div class="t" style="left:1054.88px;top:1685px;font-size:21.00px;font-weight:400;color:#101010;transform:scaleX(0.9692);transform-origin:0 0;">Summary</div>
<div class="a" style="left:1033.6px;top:1680px;width:1.0px;height:27.5px;background:#555555;"></div>
<div class="a" style="left:1167.9px;top:1676px;width:47.4px;height:36px;background:#4db3e8;border-radius:6px"></div>
<div class="t" style="left:1180.83px;top:1685px;font-size:21.00px;font-weight:400;color:#101010;transform:scaleX(0.8146);transform-origin:0 0;">BE</div>
<div class="a" style="left:1160.7px;top:1680px;width:1.0px;height:27.5px;background:#555555;"></div>
<div class="a" style="left:1229.0px;top:1676px;width:71.6px;height:36px;background:#4db3e8;border-radius:6px"></div>
<div class="t" style="left:1241.59px;top:1685px;font-size:21.00px;font-weight:400;color:#101010;transform:scaleX(0.8985);transform-origin:0 0;">ROIC</div>
<div class="a" style="left:1221.65px;top:1680px;width:1.0px;height:27.5px;background:#555555;"></div>
<div class="a" style="left:1314.0px;top:1676px;width:84.4px;height:36px;background:#4db3e8;border-radius:6px"></div>
<div class="t" style="left:1326.09px;top:1685px;font-size:21.00px;font-weight:400;color:#101010;transform:scaleX(0.9657);transform-origin:0 0;">Charts</div>
<div class="a" style="left:1306.8px;top:1680px;width:1.0px;height:27.5px;background:#555555;"></div>
<div class="a" style="left:1412.0px;top:1676px;width:63.5px;height:36px;background:#4db3e8;border-radius:6px"></div>
<div class="t" style="left:1424.20px;top:1685px;font-size:21.00px;font-weight:400;color:#101010;transform:scaleX(0.8927);transform-origin:0 0;">KPIs</div>
<div class="a" style="left:1404.7px;top:1680px;width:1.0px;height:27.5px;background:#555555;"></div>
<div class="a" style="left:1488.9px;top:1676px;width:168.4px;height:36px;background:#4db3e8;border-radius:6px"></div>
<div class="t" style="left:1500.50px;top:1685px;font-size:21.00px;font-weight:400;color:#101010;transform:scaleX(0.9551);transform-origin:0 0;">Sources &amp; Uses</div>
<div class="a" style="left:1481.7px;top:1680px;width:1.0px;height:27.5px;background:#555555;"></div>
<div class="a" style="left:1670.7px;top:1676px;width:83.2px;height:36px;background:#4db3e8;border-radius:6px"></div>
<div class="t" style="left:1683.38px;top:1685px;font-size:21.00px;font-weight:400;color:#101010;transform:scaleX(0.9629);transform-origin:0 0;">Ratios</div>
<div class="a" style="left:1663.5px;top:1680px;width:1.0px;height:27.5px;background:#555555;"></div>
<div class="a" style="left:1767.3px;top:1676px;width:95.0px;height:36px;background:#4db3e8;border-radius:6px"></div>
<div class="t" style="left:1779.02px;top:1685px;font-size:21.00px;font-weight:400;color:#101010;transform:scaleX(0.9993);transform-origin:0 0;">DuPont</div>
<div class="a" style="left:1760.1px;top:1680px;width:1.0px;height:27.5px;background:#555555;"></div>
<div class="a" style="left:1869.1px;top:1680px;width:1.0px;height:27.5px;background:#555555;"></div>
<div class="a" style="left:1875px;top:1668px;width:151.6px;height:43.6px;background:linear-gradient(#ffffff 0%,#eef6fb 45%,#cfe5f5 100%);border-radius:0 0 8px 8px;border:1.5px solid #f4f8fb;border-top:none"></div>
<div class="t" style="left:1888.19px;top:1680px;font-size:21.00px;font-weight:400;color:#101010;transform:scaleX(0.9820);transform-origin:0 0;">Top_Revenue</div>
<div class="a" style="left:1887.8px;top:1704.6px;width:127.40000000000009px;height:2.900000000000091px;background:#1e7a45;"></div>
<div class="a" style="left:2032.7px;top:1680px;width:1.0px;height:27.5px;background:#555555;"></div>
<div class="a" style="left:2040px;top:1676px;width:31.6px;height:36px;overflow:hidden">
<div class="a" style="left:0;top:0;width:60px;height:36px;background:#4db3e8;border-radius:6px"></div>
</div>
<div class="a" style="left:2040px;top:1676px;width:31.6px;height:36px;overflow:hidden">
<div class="t" style="left:7.91px;top:9px;font-size:21.00px;font-weight:400;color:#101010;transform:scaleX(1.4118);transform-origin:0 0;">To</div>
</div>
<div class="a" style="left:2088.5px;top:1690.6px;width:4.6px;height:4.6px;border-radius:50%;background:#d8d8d8"></div>
<div class="a" style="left:2094.7px;top:1690.6px;width:4.6px;height:4.6px;border-radius:50%;background:#d8d8d8"></div>
<div class="a" style="left:2100.9px;top:1690.6px;width:4.6px;height:4.6px;border-radius:50%;background:#d8d8d8"></div>
<svg class="a" style="left:2133px;top:1683px;" width="20" height="20" viewBox="0 0 20 20"><path d="M10 2 V18 M2 10 H18" stroke="#d8d8d8" stroke-width="1.5"/></svg>
<div class="a" style="left:2189.4px;top:1685.0px;width:4.6px;height:4.6px;border-radius:50%;background:#d8d8d8"></div>
<div class="a" style="left:2189.4px;top:1691.2px;width:4.6px;height:4.6px;border-radius:50%;background:#d8d8d8"></div>
<div class="a" style="left:2189.4px;top:1697.4px;width:4.6px;height:4.6px;border-radius:50%;background:#d8d8d8"></div>
<div class="a" style="left:2217px;top:1679.5px;width:643px;height:27.0px;background:#161616;border-radius:14px"></div>
<svg class="a" style="left:2220px;top:1685px;" width="18" height="16" viewBox="0 0 18 16"><path d="M12.5 2.5 L4.5 8 L12.5 13.5 Z" fill="#a0a0a0" stroke="#a0a0a0" stroke-width="2" stroke-linejoin="round"/></svg>
<div class="a" style="left:2242px;top:1687px;width:508px;height:12px;background:#a0a0a0;border-radius:6px"></div>
<svg class="a" style="left:2839px;top:1685px;" width="18" height="16" viewBox="0 0 18 16"><path d="M5.5 2.5 L13.5 8 L5.5 13.5 Z" fill="#a0a0a0" stroke="#a0a0a0" stroke-width="2" stroke-linejoin="round"/></svg>
<div class="a" style="left:11px;top:278px;width:2849px;height:27px;background:#0a0a0a;"></div>
<svg class="a" style="left:29px;top:281px;" width="22" height="22" viewBox="0 0 22 22"><path d="M21 1 V21 H1 Z" fill="#6e6e6e"/></svg>
<div class="a" style="left:11px;top:278px;width:2849px;height:27px;overflow:hidden">
<div class="a" style="left:42px;top:0;width:30px;height:27px;background:#6b6b6b;border-right:1px solid #3a3a3a"></div>
<div class="a" style="left:72px;top:0;width:45px;height:27px;background:transparent;border-right:1px solid #3a3a3a"></div>
<div class="a" style="left:117px;top:0;width:44px;height:27px;background:transparent;border-right:1px solid #3a3a3a"></div>
<div class="a" style="left:161px;top:0;width:45px;height:27px;background:transparent;border-right:1px solid #3a3a3a"></div>
<div class="a" style="left:206px;top:0;width:45px;height:27px;background:transparent;border-right:1px solid #3a3a3a"></div>
<div class="a" style="left:251px;top:0;width:45px;height:27px;background:transparent;border-right:1px solid #3a3a3a"></div>
<div class="a" style="left:296px;top:0;width:45px;height:27px;background:transparent;border-right:1px solid #3a3a3a"></div>
<div class="a" style="left:341px;top:0;width:45px;height:27px;background:transparent;border-right:1px solid #3a3a3a"></div>
<div class="a" style="left:386px;top:0;width:206px;height:27px;background:transparent;border-right:1px solid #3a3a3a"></div>
<div class="a" style="left:592px;top:0;width:206px;height:27px;background:transparent;border-right:1px solid #3a3a3a"></div>
<div class="a" style="left:798px;top:0;width:206px;height:27px;background:transparent;border-right:1px solid #3a3a3a"></div>
<div class="a" style="left:1004px;top:0;width:206px;height:27px;background:transparent;border-right:1px solid #3a3a3a"></div>
<div class="a" style="left:1210px;top:0;width:206px;height:27px;background:transparent;border-right:1px solid #3a3a3a"></div>
<div class="a" style="left:1416px;top:0;width:206px;height:27px;background:transparent;border-right:1px solid #3a3a3a"></div>
<div class="a" style="left:1622px;top:0;width:207px;height:27px;background:transparent;border-right:1px solid #3a3a3a"></div>
<div class="a" style="left:1829px;top:0;width:54px;height:27px;background:transparent;border-right:1px solid #3a3a3a"></div>
<div class="a" style="left:1883px;top:0;width:162px;height:27px;background:transparent;border-right:1px solid #3a3a3a"></div>
<div class="a" style="left:2045px;top:0;width:163px;height:27px;background:transparent;border-right:1px solid #3a3a3a"></div>
<div class="a" style="left:2208px;top:0;width:161px;height:27px;background:transparent;border-right:1px solid #3a3a3a"></div>
<div class="a" style="left:2369px;top:0;width:162px;height:27px;background:transparent;border-right:1px solid #3a3a3a"></div>
<div class="a" style="left:2531px;top:0;width:163px;height:27px;background:transparent;border-right:1px solid #3a3a3a"></div>
<div class="a" style="left:2694px;top:0;width:143px;height:27px;background:transparent;border-right:1px solid #3a3a3a"></div>
<div class="a" style="left:2837px;top:0;width:142px;height:27px;background:transparent;border-right:1px solid #3a3a3a"></div>
</div>
<div class="t" style="left:60.74px;top:282px;font-size:22.50px;font-weight:400;color:#ffffff;transform:scaleX(0.9700);transform-origin:0 0;">A</div>
<div class="t" style="left:97.92px;top:282px;font-size:22.50px;font-weight:400;color:#ececec;transform:scaleX(0.9700);transform-origin:0 0;">B</div>
<div class="t" style="left:141.98px;top:282px;font-size:22.50px;font-weight:400;color:#ececec;transform:scaleX(0.9700);transform-origin:0 0;">C</div>
<div class="t" style="left:186.26px;top:282px;font-size:22.50px;font-weight:400;color:#ececec;transform:scaleX(0.9700);transform-origin:0 0;">D</div>
<div class="t" style="left:231.81px;top:282px;font-size:22.50px;font-weight:400;color:#ececec;transform:scaleX(0.9700);transform-origin:0 0;">E</div>
<div class="t" style="left:277.41px;top:282px;font-size:22.50px;font-weight:400;color:#ececec;transform:scaleX(0.9700);transform-origin:0 0;">F</div>
<div class="t" style="left:321.26px;top:282px;font-size:22.50px;font-weight:400;color:#ececec;transform:scaleX(0.9700);transform-origin:0 0;">G</div>
<div class="t" style="left:366.64px;top:282px;font-size:22.50px;font-weight:400;color:#ececec;transform:scaleX(0.9700);transform-origin:0 0;">H</div>
<div class="t" style="left:497.00px;top:282px;font-size:22.50px;font-weight:400;color:#ececec;transform:scaleX(0.9700);transform-origin:0 0;">I</div>
<div class="t" style="left:701.20px;top:282px;font-size:22.50px;font-weight:400;color:#ececec;transform:scaleX(0.9700);transform-origin:0 0;">J</div>
<div class="t" style="left:903.98px;top:282px;font-size:22.50px;font-weight:400;color:#ececec;transform:scaleX(0.9700);transform-origin:0 0;">K</div>
<div class="t" style="left:1111.40px;top:282px;font-size:22.50px;font-weight:400;color:#ececec;transform:scaleX(0.9700);transform-origin:0 0;">L</div>
<div class="t" style="left:1314.94px;top:282px;font-size:22.50px;font-weight:400;color:#ececec;transform:scaleX(0.9700);transform-origin:0 0;">M</div>
<div class="t" style="left:1522.14px;top:282px;font-size:22.50px;font-weight:400;color:#ececec;transform:scaleX(0.9700);transform-origin:0 0;">N</div>
<div class="t" style="left:1728.04px;top:282px;font-size:22.50px;font-weight:400;color:#ececec;transform:scaleX(0.9700);transform-origin:0 0;">O</div>
<div class="t" style="left:1859.42px;top:282px;font-size:22.50px;font-weight:400;color:#ececec;transform:scaleX(0.9700);transform-origin:0 0;">P</div>
<div class="t" style="left:1966.54px;top:282px;font-size:22.50px;font-weight:400;color:#ececec;transform:scaleX(0.9700);transform-origin:0 0;">Q</div>
<div class="t" style="left:2129.26px;top:282px;font-size:22.50px;font-weight:400;color:#ececec;transform:scaleX(0.9700);transform-origin:0 0;">R</div>
<div class="t" style="left:2292.24px;top:282px;font-size:22.50px;font-weight:400;color:#ececec;transform:scaleX(0.9700);transform-origin:0 0;">S</div>
<div class="t" style="left:2454.34px;top:282px;font-size:22.50px;font-weight:400;color:#ececec;transform:scaleX(0.9700);transform-origin:0 0;">T</div>
<div class="t" style="left:2615.64px;top:282px;font-size:22.50px;font-weight:400;color:#ececec;transform:scaleX(0.9700);transform-origin:0 0;">U</div>
<div class="t" style="left:2769.24px;top:282px;font-size:22.50px;font-weight:400;color:#ececec;transform:scaleX(0.9700);transform-origin:0 0;">V</div>
<div class="a" style="left:2848px;top:278px;width:12px;height:27px;overflow:hidden">
<div class="t" style="left:4.69px;top:4px;font-size:22.50px;font-weight:400;color:#ececec;transform:scaleX(0.9700);transform-origin:0 0;">W</div>
</div>
<div class="a" style="left:11px;top:305px;width:42px;height:1365px;background:#0a0a0a;"></div>
<div class="a" style="left:11px;top:305px;width:42px;height:44px;background:#6b6b6b;border-bottom:1px solid #3a3a3a"></div>
<div class="t" style="left:25.76px;top:325px;font-size:22.00px;font-weight:400;color:#ffffff;transform:scaleX(0.9700);transform-origin:0 0;">1</div>
<div class="a" style="left:11px;top:349px;width:42px;height:41px;background:#0a0a0a;border-bottom:1px solid #3a3a3a"></div>
<div class="t" style="left:26.08px;top:366px;font-size:22.00px;font-weight:400;color:#ececec;transform:scaleX(0.9700);transform-origin:0 0;">2</div>
<div class="a" style="left:11px;top:390px;width:42px;height:40px;background:#0a0a0a;border-bottom:1px solid #3a3a3a"></div>
<div class="t" style="left:26.08px;top:406px;font-size:22.00px;font-weight:400;color:#ececec;transform:scaleX(0.9700);transform-origin:0 0;">3</div>
<div class="a" style="left:11px;top:430px;width:42px;height:29px;background:#0a0a0a;border-bottom:1px solid #3a3a3a"></div>
<div class="t" style="left:26.18px;top:435px;font-size:22.00px;font-weight:400;color:#ececec;transform:scaleX(0.9700);transform-origin:0 0;">4</div>
<div class="a" style="left:11px;top:459px;width:42px;height:43px;background:#0a0a0a;border-bottom:1px solid #3a3a3a"></div>
<div class="t" style="left:26.08px;top:478px;font-size:22.00px;font-weight:400;color:#ececec;transform:scaleX(0.9700);transform-origin:0 0;">5</div>
<div class="a" style="left:11px;top:502px;width:42px;height:35px;background:#0a0a0a;border-bottom:1px solid #3a3a3a"></div>
<div class="t" style="left:25.97px;top:513px;font-size:22.00px;font-weight:400;color:#ececec;transform:scaleX(0.9700);transform-origin:0 0;">6</div>
<div class="a" style="left:11px;top:537px;width:42px;height:28px;background:#0a0a0a;border-bottom:1px solid #3a3a3a"></div>
<div class="t" style="left:26.08px;top:541px;font-size:22.00px;font-weight:400;color:#ececec;transform:scaleX(0.9700);transform-origin:0 0;">7</div>
<div class="a" style="left:11px;top:565px;width:42px;height:6px;background:#0a0a0a;border-bottom:1px solid #3a3a3a"></div>
<div class="a" style="left:11px;top:571px;width:42px;height:29px;background:#0a0a0a;border-bottom:1px solid #3a3a3a"></div>
<div class="t" style="left:26.08px;top:576px;font-size:22.00px;font-weight:400;color:#ececec;transform:scaleX(0.9700);transform-origin:0 0;">9</div>
<div class="a" style="left:11px;top:600px;width:42px;height:29px;background:#0a0a0a;border-bottom:1px solid #3a3a3a"></div>
<div class="t" style="left:19.73px;top:605px;font-size:22.00px;font-weight:400;color:#ececec;transform:scaleX(0.9700);transform-origin:0 0;">10</div>
<div class="a" style="left:11px;top:629px;width:42px;height:29px;background:#0a0a0a;border-bottom:1px solid #3a3a3a"></div>
<div class="t" style="left:20.64px;top:634px;font-size:22.00px;font-weight:400;color:#ececec;transform:scaleX(0.9700);transform-origin:0 0;">11</div>
<div class="a" style="left:11px;top:658px;width:42px;height:29px;background:#0a0a0a;border-bottom:1px solid #3a3a3a"></div>
<div class="t" style="left:19.89px;top:663px;font-size:22.00px;font-weight:400;color:#ececec;transform:scaleX(0.9700);transform-origin:0 0;">12</div>
<div class="a" style="left:11px;top:687px;width:42px;height:29px;background:#0a0a0a;border-bottom:1px solid #3a3a3a"></div>
<div class="t" style="left:19.78px;top:692px;font-size:22.00px;font-weight:400;color:#ececec;transform:scaleX(0.9700);transform-origin:0 0;">13</div>
<div class="a" style="left:11px;top:716px;width:42px;height:29px;background:#0a0a0a;border-bottom:1px solid #3a3a3a"></div>
<div class="t" style="left:19.68px;top:721px;font-size:22.00px;font-weight:400;color:#ececec;transform:scaleX(0.9700);transform-origin:0 0;">14</div>
<div class="a" style="left:11px;top:745px;width:42px;height:22px;background:#0a0a0a;border-bottom:1px solid #3a3a3a"></div>
<div class="t" style="left:19.78px;top:744px;font-size:22.00px;font-weight:400;color:#ececec;transform:scaleX(0.9700);transform-origin:0 0;">15</div>
<div class="a" style="left:11px;top:767px;width:42px;height:42px;background:#0a0a0a;border-bottom:1px solid #3a3a3a"></div>
<div class="t" style="left:19.78px;top:785px;font-size:22.00px;font-weight:400;color:#ececec;transform:scaleX(0.9700);transform-origin:0 0;">16</div>
<div class="a" style="left:11px;top:809px;width:42px;height:29px;background:#0a0a0a;border-bottom:1px solid #3a3a3a"></div>
<div class="t" style="left:19.89px;top:814px;font-size:22.00px;font-weight:400;color:#ececec;transform:scaleX(0.9700);transform-origin:0 0;">17</div>
<div class="a" style="left:11px;top:838px;width:42px;height:29px;background:#0a0a0a;border-bottom:1px solid #3a3a3a"></div>
<div class="t" style="left:19.78px;top:843px;font-size:22.00px;font-weight:400;color:#ececec;transform:scaleX(0.9700);transform-origin:0 0;">18</div>
<div class="a" style="left:11px;top:867px;width:42px;height:29px;background:#0a0a0a;border-bottom:1px solid #3a3a3a"></div>
<div class="t" style="left:19.84px;top:872px;font-size:22.00px;font-weight:400;color:#ececec;transform:scaleX(0.9700);transform-origin:0 0;">19</div>
<div class="a" style="left:11px;top:896px;width:42px;height:29px;background:#0a0a0a;border-bottom:1px solid #3a3a3a"></div>
<div class="t" style="left:20.00px;top:901px;font-size:22.00px;font-weight:400;color:#ececec;transform:scaleX(0.9700);transform-origin:0 0;">20</div>
<div class="a" style="left:11px;top:925px;width:42px;height:29px;background:#0a0a0a;border-bottom:1px solid #3a3a3a"></div>
<div class="t" style="left:20.10px;top:930px;font-size:22.00px;font-weight:400;color:#ececec;transform:scaleX(0.9700);transform-origin:0 0;">21</div>
<div class="a" style="left:11px;top:954px;width:42px;height:29px;background:#0a0a0a;border-bottom:1px solid #3a3a3a"></div>
<div class="t" style="left:20.16px;top:959px;font-size:22.00px;font-weight:400;color:#ececec;transform:scaleX(0.9700);transform-origin:0 0;">22</div>
<div class="a" style="left:11px;top:983px;width:42px;height:29px;background:#0a0a0a;border-bottom:1px solid #3a3a3a"></div>
<div class="t" style="left:20.05px;top:988px;font-size:22.00px;font-weight:400;color:#ececec;transform:scaleX(0.9700);transform-origin:0 0;">23</div>
<div class="a" style="left:11px;top:1012px;width:42px;height:29px;background:#0a0a0a;border-bottom:1px solid #3a3a3a"></div>
<div class="t" style="left:19.94px;top:1017px;font-size:22.00px;font-weight:400;color:#ececec;transform:scaleX(0.9700);transform-origin:0 0;">24</div>
<div class="a" style="left:11px;top:1041px;width:42px;height:29px;background:#0a0a0a;border-bottom:1px solid #3a3a3a"></div>
<div class="t" style="left:20.05px;top:1046px;font-size:22.00px;font-weight:400;color:#ececec;transform:scaleX(0.9700);transform-origin:0 0;">25</div>
<div class="a" style="left:11px;top:1070px;width:42px;height:29px;background:#0a0a0a;border-bottom:1px solid #3a3a3a"></div>
<div class="t" style="left:20.05px;top:1075px;font-size:22.00px;font-weight:400;color:#ececec;transform:scaleX(0.9700);transform-origin:0 0;">26</div>
<div class="a" style="left:11px;top:1099px;width:42px;height:29px;background:#0a0a0a;border-bottom:1px solid #3a3a3a"></div>
<div class="t" style="left:20.16px;top:1104px;font-size:22.00px;font-weight:400;color:#ececec;transform:scaleX(0.9700);transform-origin:0 0;">27</div>
<div class="a" style="left:11px;top:1128px;width:42px;height:29px;background:#0a0a0a;border-bottom:1px solid #3a3a3a"></div>
<div class="t" style="left:20.05px;top:1133px;font-size:22.00px;font-weight:400;color:#ececec;transform:scaleX(0.9700);transform-origin:0 0;">28</div>
<div class="a" style="left:11px;top:1157px;width:42px;height:29px;background:#0a0a0a;border-bottom:1px solid #3a3a3a"></div>
<div class="t" style="left:20.10px;top:1162px;font-size:22.00px;font-weight:400;color:#ececec;transform:scaleX(0.9700);transform-origin:0 0;">29</div>
<div class="a" style="left:11px;top:1186px;width:42px;height:29px;background:#0a0a0a;border-bottom:1px solid #3a3a3a"></div>
<div class="t" style="left:20.10px;top:1191px;font-size:22.00px;font-weight:400;color:#ececec;transform:scaleX(0.9700);transform-origin:0 0;">30</div>
<div class="a" style="left:11px;top:1215px;width:42px;height:29px;background:#0a0a0a;border-bottom:1px solid #3a3a3a"></div>
<div class="t" style="left:20.21px;top:1220px;font-size:22.00px;font-weight:400;color:#ececec;transform:scaleX(0.9700);transform-origin:0 0;">31</div>
<div class="a" style="left:11px;top:1244px;width:42px;height:29px;background:#0a0a0a;border-bottom:1px solid #3a3a3a"></div>
<div class="t" style="left:20.26px;top:1249px;font-size:22.00px;font-weight:400;color:#ececec;transform:scaleX(0.9700);transform-origin:0 0;">32</div>
<div class="a" style="left:11px;top:1273px;width:42px;height:29px;background:#0a0a0a;border-bottom:1px solid #3a3a3a"></div>
<div class="t" style="left:20.16px;top:1278px;font-size:22.00px;font-weight:400;color:#ececec;transform:scaleX(0.9700);transform-origin:0 0;">33</div>
<div class="a" style="left:11px;top:1302px;width:42px;height:29px;background:#0a0a0a;border-bottom:1px solid #3a3a3a"></div>
<div class="t" style="left:20.05px;top:1307px;font-size:22.00px;font-weight:400;color:#ececec;transform:scaleX(0.9700);transform-origin:0 0;">34</div>
<div class="a" style="left:11px;top:1331px;width:42px;height:29px;background:#0a0a0a;border-bottom:1px solid #3a3a3a"></div>
<div class="t" style="left:20.16px;top:1336px;font-size:22.00px;font-weight:400;color:#ececec;transform:scaleX(0.9700);transform-origin:0 0;">35</div>
<div class="a" style="left:11px;top:1360px;width:42px;height:29px;background:#0a0a0a;border-bottom:1px solid #3a3a3a"></div>
<div class="t" style="left:20.16px;top:1365px;font-size:22.00px;font-weight:400;color:#ececec;transform:scaleX(0.9700);transform-origin:0 0;">36</div>
<div class="a" style="left:11px;top:1389px;width:42px;height:29px;background:#0a0a0a;border-bottom:1px solid #3a3a3a"></div>
<div class="t" style="left:20.26px;top:1394px;font-size:22.00px;font-weight:400;color:#ececec;transform:scaleX(0.9700);transform-origin:0 0;">37</div>
<div class="a" style="left:11px;top:1418px;width:42px;height:29px;background:#0a0a0a;border-bottom:1px solid #3a3a3a"></div>
<div class="t" style="left:20.16px;top:1423px;font-size:22.00px;font-weight:400;color:#ececec;transform:scaleX(0.9700);transform-origin:0 0;">38</div>
<div class="a" style="left:11px;top:1447px;width:42px;height:29px;background:#0a0a0a;border-bottom:1px solid #3a3a3a"></div>
<div class="t" style="left:20.21px;top:1452px;font-size:22.00px;font-weight:400;color:#ececec;transform:scaleX(0.9700);transform-origin:0 0;">39</div>
<div class="a" style="left:11px;top:1476px;width:42px;height:29px;background:#0a0a0a;border-bottom:1px solid #3a3a3a"></div>
<div class="t" style="left:20.32px;top:1481px;font-size:22.00px;font-weight:400;color:#ececec;transform:scaleX(0.9700);transform-origin:0 0;">40</div>
<div class="a" style="left:11px;top:1505px;width:42px;height:29px;background:#0a0a0a;border-bottom:1px solid #3a3a3a"></div>
<div class="t" style="left:20.42px;top:1510px;font-size:22.00px;font-weight:400;color:#ececec;transform:scaleX(0.9700);transform-origin:0 0;">41</div>
<div class="a" style="left:11px;top:1534px;width:42px;height:43px;background:#0a0a0a;border-bottom:1px solid #3a3a3a"></div>
<div class="t" style="left:20.48px;top:1553px;font-size:22.00px;font-weight:400;color:#ececec;transform:scaleX(0.9700);transform-origin:0 0;">42</div>
<div class="a" style="left:11px;top:1577px;width:42px;height:29px;background:#0a0a0a;border-bottom:1px solid #3a3a3a"></div>
<div class="t" style="left:20.37px;top:1582px;font-size:22.00px;font-weight:400;color:#ececec;transform:scaleX(0.9700);transform-origin:0 0;">43</div>
<div class="a" style="left:11px;top:1606px;width:42px;height:29px;background:#0a0a0a;border-bottom:1px solid #3a3a3a"></div>
<div class="t" style="left:20.26px;top:1611px;font-size:22.00px;font-weight:400;color:#ececec;transform:scaleX(0.9700);transform-origin:0 0;">44</div>
<div class="a" style="left:11px;top:1635px;width:42px;height:30px;background:#0a0a0a;border-bottom:1px solid #3a3a3a"></div>
<div class="t" style="left:20.37px;top:1641px;font-size:22.00px;font-weight:400;color:#ececec;transform:scaleX(0.9700);transform-origin:0 0;">45</div>
<div class="a" style="left:11px;top:1665px;width:42px;height:5px;background:#0a0a0a;border-bottom:1px solid #3a3a3a"></div>
<div class="a" style="left:11px;top:304.5px;width:42px;height:1.0px;background:#9a9a9a;"></div>
<div class="a" style="left:11px;top:348.5px;width:42px;height:1.0px;background:#9a9a9a;"></div>
<div class="a" style="left:53px;top:304px;width:1.6000000000000014px;height:45.5px;background:#1e7145;"></div>
<div class="a" style="left:53px;top:303.8px;width:30.599999999999994px;height:1.5px;background:#1e7145;"></div>
<div class="a" style="left:11px;top:1718px;width:2880px;height:33px;background:#141414;"></div>
<div class="a" style="left:11px;top:1718px;width:2880px;height:1px;background:#333333;"></div>
<div class="t" style="left:26.50px;top:1728px;font-size:16.70px;font-weight:400;color:#e4e4e4;transform:scaleX(0.8950);transform-origin:0 0;">Ready</div>
<svg class="a" style="left:97px;top:1724px;" width="26" height="24" viewBox="0 0 26 24"><path d="M2 19.5 V2.2 H22.5 V9" stroke="#ececec" stroke-width="1.9" fill="none"/><path d="M2 6.5 H22.5" stroke="#ececec" stroke-width="1.6"/><path d="M4.5 10.5 H9 M4.5 14.5 H8 M4.5 18.5 H8" stroke="#ececec" stroke-width="1.5"/><circle cx="16.8" cy="15.5" r="5.4" stroke="#ececec" stroke-width="2" fill="#141414"/><circle cx="16.8" cy="15.5" r="2.4" fill="#ececec"/></svg>
<svg class="a" style="left:144px;top:1722px;" width="26" height="26" viewBox="0 0 26 26"><circle cx="11.8" cy="4.2" r="2.5" stroke="#ececec" stroke-width="1.8" fill="none"/><path d="M2.5 8.5 Q5 11 8.5 10 L11.8 9.5 L15.5 10 Q18 11 20.5 7.5" stroke="#ececec" stroke-width="1.9" fill="none" stroke-linecap="round"/><path d="M9 10 V15 Q8 19 4.5 22.5 M14 10.5 V15.5 L12.5 18.5" stroke="#ececec" stroke-width="1.9" fill="none" stroke-linecap="round"/><path d="M15 17 L23 24.5 M23 17 L15 24.5" stroke="#ececec" stroke-width="1.7"/></svg>
<div class="t" style="left:172.81px;top:1728px;font-size:16.70px;font-weight:700;color:#f2f2f2;transform:scaleX(0.9453);transform-origin:0 0;">Accessibility: Investigate</div>
<div class="a" style="left:2445px;top:1719px;width:60.09999999999991px;height:32px;background:#262626;"></div>
<svg class="a" style="left:2463px;top:1723px;" width="22" height="22" viewBox="0 0 22 22"><rect x="1.4" y="1" width="19.5" height="19.5" fill="#e8e8e8"/><rect x="3.6" y="3.2" width="3.8" height="3.8" fill="#262626"/><rect x="3.6" y="9.2" width="3.8" height="3.8" fill="#262626"/><rect x="3.6" y="15.2" width="3.8" height="3.8" fill="#262626"/><rect x="9.6" y="3.2" width="3.8" height="3.8" fill="#262626"/><rect x="9.6" y="9.2" width="3.8" height="3.8" fill="#262626"/><rect x="9.6" y="15.2" width="3.8" height="3.8" fill="#262626"/><rect x="15.6" y="3.2" width="3.8" height="3.8" fill="#262626"/><rect x="15.6" y="9.2" width="3.8" height="3.8" fill="#262626"/><rect x="15.6" y="15.2" width="3.8" height="3.8" fill="#262626"/></svg>
<svg class="a" style="left:2523px;top:1723px;" width="24" height="22" viewBox="0 0 24 22"><rect x="2.2" y="2" width="19.5" height="18.5" stroke="#e8e8e8" stroke-width="1.8" fill="none"/><rect x="6.2" y="5.6" width="11.5" height="11.3" stroke="#e8e8e8" stroke-width="1.4" fill="none"/><path d="M8.5 9 H15.5 M8.5 11.5 H15.5 M8.5 14 H15.5" stroke="#e8e8e8" stroke-width="1.2"/></svg>
<svg class="a" style="left:2583px;top:1723px;" width="24" height="22" viewBox="0 0 24 22"><path d="M2.2 2 H21.7 V20.5 H2.2 Z" stroke="#e8e8e8" stroke-width="1.8" fill="none"/><path d="M2.2 13 H9 V2 M9 8 V2 M15 2 V13 H9" stroke="#e8e8e8" stroke-width="1.5" fill="none"/></svg>
<div class="a" style="left:2633.3px;top:1733.6px;width:11.699999999999818px;height:1.6000000000001364px;background:#d6d6d6;"></div>
<div class="a" style="left:2652.8px;top:1733.4px;width:148.0999999999999px;height:2.199999999999818px;background:#c6c6c6;border-radius:1px"></div>
<div class="a" style="left:2726px;top:1730.5px;width:2px;height:8.700000000000045px;background:#c6c6c6;"></div>
<div class="a" style="left:2732.7px;top:1726px;width:8.400000000000091px;height:17.09999999999991px;background:#c6c6c6;border-radius:1px"></div>
<svg class="a" style="left:2807px;top:1727px;" width="16" height="16" viewBox="0 0 16 16"><path d="M8 1.5 V13.2 M2 7.5 H13.8" stroke="#e0e0e0" stroke-width="1.4"/></svg>
<div class="t" style="left:2839.64px;top:1728px;font-size:16.00px;font-weight:400;color:#e8e8e8;transform:scaleX(0.9694);transform-origin:0 0;">140%</div>
</body></html>
